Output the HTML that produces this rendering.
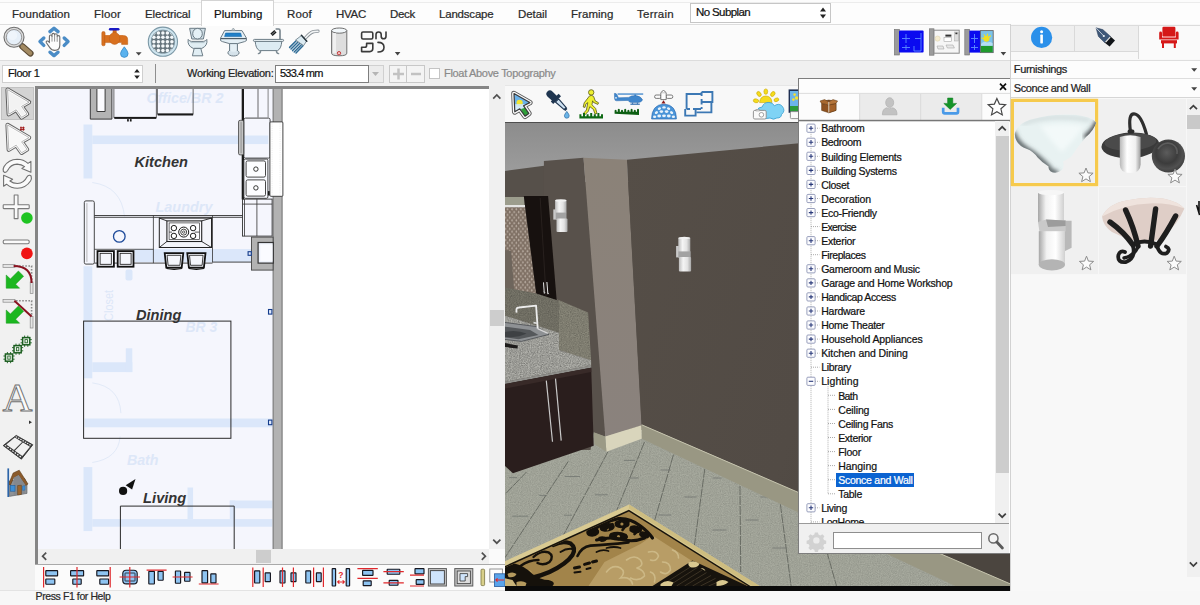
<!DOCTYPE html>
<html>
<head>
<meta charset="utf-8">
<title>Home Designer - Plumbing</title>
<style>
*{box-sizing:border-box;margin:0;padding:0}
html,body{width:1200px;height:605px;overflow:hidden;background:#f0f0f0}
body{font-family:"Liberation Sans","DejaVu Sans",sans-serif;font-size:11px;color:#1a1a1a;position:relative}
#app{position:absolute;left:0;top:0;width:1200px;height:605px;overflow:hidden;background:#f0f0f0}
#app>div,#app>svg,#app>span{position:absolute}
.t{position:absolute;white-space:nowrap;color:#2a2a2a;-webkit-text-stroke:0.22px;font-family:"Liberation Sans","DejaVu Sans",sans-serif}
svg{display:block;overflow:hidden}
.b{position:absolute}
</style>
</head>
<body>
<div id="app">
<!-- ===== top tab bar ===== -->
<div style="left:0;top:0;width:1200px;height:26px;background:#fcfcfc"></div>
<div style="left:0;top:2px;width:1200px;height:23px;background:#fdfdfd;border-top:1px solid #ececec;border-bottom:1px solid #dddddd"></div>
<div style="left:201px;top:0;width:73px;height:26px;background:#fff;border:1px solid #d4d4d4;border-bottom:none"></div>
<span class="t" style="left:12.0px;top:9.02px;font-size:11.5px;line-height:11.5px;letter-spacing:0.045px;">Foundation</span>
<span class="t" style="left:94.0px;top:9.02px;font-size:11.5px;line-height:11.5px;letter-spacing:0.159px;">Floor</span>
<span class="t" style="left:145.0px;top:9.02px;font-size:11.5px;line-height:11.5px;letter-spacing:-0.116px;">Electrical</span>
<span class="t" style="left:214.0px;top:9.02px;font-size:11.5px;line-height:11.5px;letter-spacing:0.068px;color:#111">Plumbing</span>
<span class="t" style="left:287.0px;top:9.02px;font-size:11.5px;line-height:11.5px;letter-spacing:0.176px;">Roof</span>
<span class="t" style="left:336.0px;top:9.02px;font-size:11.5px;line-height:11.5px;letter-spacing:-0.277px;">HVAC</span>
<span class="t" style="left:390.0px;top:9.02px;font-size:11.5px;line-height:11.5px;letter-spacing:-0.301px;">Deck</span>
<span class="t" style="left:439.0px;top:9.02px;font-size:11.5px;line-height:11.5px;letter-spacing:-0.198px;">Landscape</span>
<span class="t" style="left:518.0px;top:9.02px;font-size:11.5px;line-height:11.5px;letter-spacing:-0.068px;">Detail</span>
<span class="t" style="left:571.0px;top:9.02px;font-size:11.5px;line-height:11.5px;letter-spacing:0.045px;">Framing</span>
<span class="t" style="left:637.0px;top:9.02px;font-size:11.5px;line-height:11.5px;letter-spacing:0.263px;">Terrain</span>
<div style="left:690px;top:3px;width:141px;height:20px;background:#fff;border:1px solid #c6c6c6"></div>
<span class="t" style="left:696.0px;top:7.27px;font-size:11.5px;line-height:11.5px;letter-spacing:-0.611px;color:#111">No Subplan</span>
<svg style="left:818px;top:6px" width="10" height="14" viewBox="0 0 10 14"><path d="M2 5.5 L5 1.5 L8 5.5Z M2 8.5 L5 12.5 L8 8.5Z" fill="#222"/></svg>
<!-- ===== icon toolbar ===== -->
<div style="left:0;top:26px;width:1010px;height:35px;background:#fbfbfb;border-bottom:1px solid #dcdcdc"></div>
<!-- ===== row 3 ===== -->
<div style="left:0;top:61px;width:1010px;height:25px;background:#f0f0f0"></div>
<div style="left:2px;top:65px;width:141px;height:18px;background:#fff;border:1px solid #cfcfcf"></div>
<span class="t" style="left:8.0px;top:68.19px;font-size:11.0px;line-height:11.0px;letter-spacing:-0.393px;color:#111">Floor 1</span>
<svg style="left:132px;top:67px" width="10" height="14" viewBox="0 0 10 14"><path d="M2.2 5.5 L5 2 L7.8 5.5Z M2.2 8.5 L5 12 L7.8 8.5Z" fill="#222"/></svg>
<div style="left:155px;top:64px;width:1px;height:19px;background:#8e8e8e"></div>
<span class="t" style="left:187.0px;top:68.19px;font-size:11.0px;line-height:11.0px;letter-spacing:-0.279px;color:#222">Working Elevation:</span>
<div style="left:275px;top:64.6px;width:109px;height:18px;background:#fff;border:1px solid #d0d0d0"></div>
<div style="left:275px;top:64.6px;width:94px;height:18px;background:#fff;border:1px solid #7e7e7e"></div>
<div style="left:369px;top:65.6px;width:14px;height:16px;background:#ececec"></div>
<svg style="left:371px;top:71px" width="9" height="6" viewBox="0 0 9 6"><path d="M1 1 L8 1 L4.5 5Z" fill="#b4b4b4"/></svg>
<span class="t" style="left:280.0px;top:68.19px;font-size:11.0px;line-height:11.0px;letter-spacing:-0.803px;color:#111">533.4 mm</span>
<div style="left:389px;top:65px;width:18px;height:18px;background:#f4f4f4;border:1px solid #c8c8c8"></div>
<div style="left:407px;top:65px;width:18px;height:18px;background:#f4f4f4;border:1px solid #c8c8c8;border-left:none"></div>
<svg style="left:389px;top:65px" width="36" height="18" viewBox="0 0 36 18"><path d="M4 7.800h11v2.500H4z M8.250 3.500h2.500v11h-2.500z M22 7.800h10v2.500H22z" fill="#c2c2c2"/></svg>
<div style="left:429px;top:68px;width:11px;height:11px;background:#fff;border:1px solid #c4c4c4"></div>
<span class="t" style="left:444.0px;top:68.19px;font-size:11.0px;line-height:11.0px;letter-spacing:-0.316px;color:#8a8a8a">Float Above Topography</span>
<!-- ===== toolbar icons ===== -->
<svg style="left:0;top:26px" width="1010" height="35" viewBox="0 26 1010 35">
  <!-- magnifier -->
  <line x1="22.400" y1="46.400" x2="30.400" y2="53.400" stroke="#5a4a34" stroke-width="6.400" stroke-linecap="round"/>
  <line x1="22.600" y1="46.600" x2="30.200" y2="53.200" stroke="#a28a62" stroke-width="4.200" stroke-linecap="round"/>
  <circle cx="14" cy="37.200" r="10" fill="#dcdcdc" stroke="#6e6e6e" stroke-width="1.100"/>
  <circle cx="14" cy="37.200" r="7.700" fill="#e6eff8" stroke="#8e8e8e" stroke-width="0.900"/>
  <circle cx="12.600" cy="35.600" r="4.600" fill="#f1f6fb" opacity="0.800"/>
  <!-- pan -->
  <g fill="none" stroke="#4a8cc6" stroke-width="3.400" stroke-linecap="round" stroke-linejoin="round">
    <path d="M50 31.600 L54 28.200 L58 31.600"/><path d="M50 52.200 L54 55.600 L58 52.200"/>
    <path d="M43.800 38 L40 41.600 L43.800 45.400"/><path d="M64.200 38 L68 41.600 L64.200 45.400"/>
  </g>
  <path d="M49.400 42.600 V36.400 Q49.400 35 50.700 35 Q52 35 52 36.400 V34.800 Q52 33.400 53.300 33.400 Q54.600 33.400 54.600 34.800 V35 Q54.600 33.800 55.900 33.800 Q57.200 33.800 57.200 35.200 V36.600 Q57.200 35.600 58.500 35.600 Q59.800 35.600 59.800 37 V45 Q59.800 50.400 54.800 50.400 Q51.600 50.400 49.800 47.600 L46.400 42.800 Q45.800 41.600 46.900 41.100 Q48 40.700 48.800 41.800Z" fill="#fdfdfd" stroke="#6c6c6c" stroke-width="1.100" stroke-linejoin="round"/>
  <path d="M52 36.400 V41.600 M54.600 35 V41.600 M57.200 36.600 V41.800" stroke="#8a8a8a" stroke-width="0.900" fill="none"/>
  <!-- faucet -->
  <g fill="#d8701f" stroke="#b95c16" stroke-width="0.500">
    <rect x="113" y="29.800" width="3.200" height="3.600"/>
    <rect x="101.800" y="31.600" width="3.300" height="14.200" rx="1.400"/>
    <path d="M104.600 35.600 H123.400 Q127.700 35.600 127.700 39.800 V44.400 H121.600 V42.600 H104.600Z"/>
    <ellipse cx="114.600" cy="38.400" rx="5.300" ry="6"/>
  </g>
  <path d="M105 36 H110 M119.600 36 H123" stroke="#d8701f" stroke-width="1" fill="none"/>
  <rect x="108.900" y="27.900" width="10.600" height="2.600" rx="1.300" fill="#1a1ac4"/>
  <path d="M124.300 46.800 q3.800 4.800 3.800 6.800 a3.800 3.800 0 0 1 -7.600 0 q0-2 3.800-6.800z" fill="#5ab2ee" stroke="#2a7fc0" stroke-width="0.700"/>
  <path d="M135.800 52.200 h5.800 l-2.900 3.300z" fill="#444"/>
  <!-- drain -->
  <defs><clipPath id="drc"><circle cx="162.9" cy="41.7" r="11.600"/></clipPath></defs>
  <circle cx="162.9" cy="41.7" r="14.600" fill="#cfe5ef" stroke="#7c98a6" stroke-width="1.100"/>
  <circle cx="162.9" cy="41.7" r="11.800" fill="#66757d" stroke="#7c98a6" stroke-width="0.700"/>
  <g fill="#f4f8fa" clip-path="url(#drc)"><circle cx="153.9" cy="32.9" r="1.750"/><circle cx="153.9" cy="37.3" r="1.750"/><circle cx="153.9" cy="41.7" r="1.750"/><circle cx="153.9" cy="46.1" r="1.750"/><circle cx="153.9" cy="50.5" r="1.750"/><circle cx="158.4" cy="32.9" r="1.750"/><circle cx="158.4" cy="37.3" r="1.750"/><circle cx="158.4" cy="41.7" r="1.750"/><circle cx="158.4" cy="46.1" r="1.750"/><circle cx="158.4" cy="50.5" r="1.750"/><circle cx="162.9" cy="28.5" r="1.750"/><circle cx="162.9" cy="32.9" r="1.750"/><circle cx="162.9" cy="37.3" r="1.750"/><circle cx="162.9" cy="41.7" r="1.750"/><circle cx="162.9" cy="46.1" r="1.750"/><circle cx="162.9" cy="50.5" r="1.750"/><circle cx="162.9" cy="54.9" r="1.750"/><circle cx="167.4" cy="32.9" r="1.750"/><circle cx="167.4" cy="37.3" r="1.750"/><circle cx="167.4" cy="41.7" r="1.750"/><circle cx="167.4" cy="46.1" r="1.750"/><circle cx="167.4" cy="50.5" r="1.750"/><circle cx="171.9" cy="32.9" r="1.750"/><circle cx="171.9" cy="37.3" r="1.750"/><circle cx="171.9" cy="41.7" r="1.750"/><circle cx="171.9" cy="46.1" r="1.750"/><circle cx="171.9" cy="50.5" r="1.750"/></g>
  <!-- toilet -->
  <g fill="#e1eef4" stroke="#6c7c86" stroke-width="1" stroke-linejoin="round">
    <path d="M189.600 28.300 H205.400 L203.400 39 H191.800Z" fill="#cfdde5"/>
    <ellipse cx="197.500" cy="33.700" rx="4.800" ry="5.300" fill="#e4f0f6"/>
    <path d="M188.200 39.400 Q189.400 41.400 191.600 41.400 H203.400 Q205.600 41.400 206.800 39.400 Q208 45.600 201.800 48.400 H193.200 Q187 45.600 188.200 39.400Z"/>
    <path d="M194.200 48.400 H200.800 L202.800 55.800 H192.400Z"/>
  </g>
  <path d="M190.600 42.600 H204.400" stroke="#9db0ba" stroke-width="0.700" fill="none"/>
  <!-- pedestal sink -->
  <g fill="#e4eff5" stroke="#6c7c86" stroke-width="1" stroke-linejoin="round">
    <path d="M229.600 43.400 H237.400 V51 H229.600Z"/>
    <ellipse cx="233.500" cy="52.800" rx="5.600" ry="3.200" fill="#d5e2ea"/>
    <path d="M229.600 50.600 Q233.500 53 237.400 50.600 V44 H229.600Z" stroke="none"/>
    <path d="M229.600 43.400 V51 M237.400 43.400 V51" fill="none"/>
    <path d="M224.600 30.600 H242 L246.400 38 Q247.400 41.400 244.600 41.600 L237.600 43.600 H229.400 L222.400 41.600 Q219.600 41.400 220.600 38Z"/>
    <path d="M220.800 38.600 H246.200" stroke="#4e5c66" stroke-width="1.200" fill="none"/>
    <path d="M225.600 33 H240.600 L241.600 36.600 H224.600Z" fill="#1f7fc8" stroke="#1a68a6" stroke-width="0.600"/>
    <path d="M231.600 30.400 L233.300 28 L235 30.400Z" fill="#cfd6da" stroke="#8a969e" stroke-width="0.700"/>
  </g>
  <!-- bathtub -->
  <g stroke="#6c7c86" stroke-width="1" fill="#dcebf2" stroke-linejoin="round">
    <path d="M280 39.600 V30.400 Q280 29 278.600 29 H275.600" fill="none" stroke="#75838b" stroke-width="1.600"/>
    <path d="M270.400 33.400 L274.400 30 L276.600 32.600 L272.600 36Z" fill="#17191b" stroke="none"/>
    <path d="M271.600 34.600 L275.600 31.200" stroke="#d8d8d8" stroke-width="0.600"/>
    <path d="M255.200 41 H281.800 Q281.400 48.600 277.600 50.600 H259.400 Q255.600 48.600 255.200 41Z"/>
    <rect x="253.400" y="39.400" width="30.200" height="2" rx="1" fill="#eef5f9"/>
    <path d="M260.600 50.800 Q260.600 53.400 258.400 53.600 M276.400 50.800 Q276.400 53.400 278.600 53.600" fill="none" stroke="#7c8a92" stroke-width="1.400" stroke-linecap="round"/>
  </g>
  <!-- shower -->
  <g>
    <path d="M305.400 38 Q310 32.600 313.600 31.600 L318 31.200" fill="none" stroke="#8a9298" stroke-width="3.200" stroke-linecap="round"/>
    <path d="M305.400 38 Q310 32.600 313.600 31.600 L318 31.200" fill="none" stroke="#f4f6f7" stroke-width="1.600" stroke-linecap="round"/>
    <g stroke="#2f6c96" stroke-width="1.500" stroke-linecap="round">
      <line x1="296.200" y1="40.800" x2="289.600" y2="47.400"/><line x1="298" y1="42" x2="291" y2="49"/><line x1="299.800" y1="43.200" x2="292.600" y2="50.600"/><line x1="301.600" y1="44.400" x2="294.200" y2="52"/><line x1="303.200" y1="45.400" x2="296" y2="53"/>
    </g>
    <path d="M301.600 35.400 L306.600 41 L303.600 45.600 L295.600 40Z" fill="#dcebf2" stroke="#74858f" stroke-width="0.900" stroke-linejoin="round"/>
    <path d="M301.400 35.200 L306.800 41.200" stroke="#27343c" stroke-width="1.500" stroke-linecap="round"/>
  </g>
  <!-- water heater -->
  <g>
    <path d="M331.600 30.600 v22.600 q0 2.600 7.600 2.600 q7.600 0 7.600-2.600 v-22.600z" fill="#dedede" stroke="#6e6e6e" stroke-width="1"/>
    <ellipse cx="339.2" cy="30.600" rx="7.600" ry="2.600" fill="#f2f7fa" stroke="#6e6e6e" stroke-width="1"/>
    <rect x="333" y="33" width="3" height="20" fill="#f4f4f4" opacity="0.8"/>
    <circle cx="339" cy="53.2" r="1.7" fill="#f2c0c0" stroke="#c03030" stroke-width="0.9"/>
  </g>
  <!-- pipes -->
  <g fill="none" stroke="#3a3a3a" stroke-width="1.6" stroke-linejoin="round" stroke-linecap="round">
    <rect x="361.6" y="32" width="11.2" height="7" rx="1.4"/>
    <path d="M376 38.8 v-4.2 q0-2.6 2.6-2.6 q2.6 0 2.6 2.6 v1.6 q0 2.6 2.4 2.6 q2.4 0 2.4-2.6 v-4.2"/>
    <path d="M366.6 43.4 h6.2 v5.2 q0 3 -3 3 h-8.2 v-4.4 h3.2 q1.8 0 1.8-1.8z"/>
    <path d="M378 42.4 q6 0 6 4.8 q0 4.8 -6 4.8"/>
  </g>
  <path d="M394.8 52 h5.6 l-2.8 3.4z" fill="#444"/>
  <!-- right side plan icons -->
  <g>
    <rect x="894.4" y="29.4" width="5" height="25.6" fill="#9b9b9b" stroke="#6f6f6f" stroke-width="0.6"/>
    <rect x="899" y="30.6" width="24.6" height="22" rx="1" fill="#0a0af0"/>
    <path d="M902 38.5 h8 M906 34 v9 M915 38.5 h6 M921 33 v18 h-7 v-5 M902 47.5 h8 M906 45 v5" fill="none" stroke="#5c8cff" stroke-width="0.9"/>
    <rect x="929.4" y="28.8" width="4.6" height="26.4" fill="#9b9b9b" stroke="#6f6f6f" stroke-width="0.6"/>
    <rect x="934" y="30.2" width="25.2" height="23" fill="#f6f6f6" stroke="#8a8a8a" stroke-width="1"/>
    <circle cx="937.6" cy="38.6" r="2.6" fill="#f5ecd0" stroke="#d8cfa8" stroke-width="0.5"/>
    <rect x="945.4" y="34.6" width="6" height="2" fill="#333"/><rect x="944" y="37.4" width="7.4" height="4" fill="#fff" stroke="#999" stroke-width="0.5"/>
    <rect x="954.6" y="32" width="3.6" height="9" fill="#ddd" stroke="#999" stroke-width="0.4"/><rect x="955.4" y="32.6" width="2" height="1.6" fill="#333"/>
    <path d="M937 46 h6 l1 3 h-6z M946 45 h7 l1.4 3 h-7z" fill="#e8e8e8" stroke="#999" stroke-width="0.5"/>
    <rect x="964.8" y="29.4" width="4.8" height="25.6" fill="#9b9b9b" stroke="#6f6f6f" stroke-width="0.6"/>
    <rect x="969.4" y="30.6" width="11" height="22" fill="#0a0af0"/>
    <path d="M971 38.5 h7 M974.5 34 v9 M971 47.5 h7 M974.5 45 v5" fill="none" stroke="#5c8cff" stroke-width="0.9"/>
    <rect x="980.4" y="30.6" width="12.8" height="22" fill="#7cc4ea" stroke="#666" stroke-width="0.9"/>
    <rect x="980.9" y="45.8" width="11.8" height="6.4" fill="#1f9a2c"/>
    <path d="M981 44 q3-3.4 6-1.4 q3-1.6 5.6 0.6 v2.6 h-11.6z" fill="#b5dff2"/>
    <circle cx="986.4" cy="38.8" r="3" fill="#f0e020"/>
    <path d="M982 38 l1.6 0.6 M984 34.8 l0.9 1.4 M987.6 34.2 l-0.3 1.6 M990.4 36 l-1.2 1" stroke="#f0e020" stroke-width="1.2" stroke-linecap="round"/>
    <path d="M1000.6 52 h5.6 l-2.8 3.4z" fill="#444"/>
  </g>
</svg>
<!-- ===== left tool column ===== -->
<div style="left:0;top:86px;width:35px;height:505px;background:#f1f1f1"></div>
<div style="left:1px;top:87px;width:33px;height:33px;background:#d3d3d3;border:1px solid #c2c2c2"></div>
<svg style="left:0;top:86px" width="35" height="505" viewBox="0 86 35 505">
  <defs>
    <path id="arw" d="M7.6 89.6 L29 102.2 L21.6 106.4 L27 114 L21.6 117.4 L16.2 109.8 L8.8 114.2Z"/>
  </defs>
  <use href="#arw" fill="none" stroke="#5e5e5e" stroke-width="4.4" stroke-linejoin="round"/>
  <use href="#arw" fill="#f2f2f2" stroke="#fdfdfd" stroke-width="2.4" stroke-linejoin="round"/>
  <use href="#arw" fill="none" stroke="#9a9a9a" stroke-width="0.8" stroke-linejoin="round"/>
  <g transform="translate(0,35.4)">
    <use href="#arw" fill="none" stroke="#666" stroke-width="4.4" stroke-linejoin="round"/>
    <use href="#arw" fill="#f8f8f8" stroke="#fefefe" stroke-width="2.4" stroke-linejoin="round"/>
    <use href="#arw" fill="none" stroke="#a4a4a4" stroke-width="0.8" stroke-linejoin="round"/>
  </g>
  <path d="M21 126.6 v4 M23.4 126.6 v4 M20 127.8 h4.6 M20 129.6 h4.6" stroke="#a01818" stroke-width="1" fill="none"/>
  <!-- rotate arrows -->
  <g fill="#fafafa" stroke="#707070" stroke-width="1.100" stroke-linejoin="round">
    <path d="M3.400 171.600 Q2.600 169 4 166.600 Q8.500 159.600 17.100 159.300 Q23.600 159.400 28 163.400 L30.900 161.400 L30.900 172.300 L21.900 168.400 L24.600 166.600 Q21.500 164.200 17.100 164.100 Q10.500 164.400 7.600 170.600 Q6.600 172.600 4.800 172.400Z"/>
    <path d="M31.100 176 Q31.900 178.600 30.500 181 Q26 188 17.400 188.300 Q10.900 188.200 6.500 184.200 L3.600 186.200 L3.600 175.300 L12.600 179.200 L9.900 181 Q13 183.400 17.400 183.500 Q24 183.200 26.900 177 Q27.900 175 29.700 175.200Z"/>
  </g>
  <!-- plus / green -->
  <path d="M14.2 195 h3.8 v9.8 h10.6 q0.6 0 0.6 0.6 v2.6 q0 0.6-0.6 0.6 h-10.6 v10 h-3.8 v-10 h-10.4 q-0.6 0-0.6-0.6 v-2.6 q0-0.6 0.6-0.6 h10.4z" fill="#fafafa" stroke="#7a7a7a" stroke-width="1.1" stroke-linejoin="round"/>
  <circle cx="26.9" cy="218" r="5.8" fill="#1fc422"/>
  <!-- minus / red -->
  <rect x="3.2" y="240" width="26" height="3.8" rx="1.6" fill="#fafafa" stroke="#7a7a7a" stroke-width="1.1"/>
  <circle cx="26.9" cy="253.4" r="5.8" fill="#f01414"/>
  <!-- fillet -->
  <g>
    <rect x="3" y="264.6" width="12" height="2.8" fill="#e4e4e4" stroke="#8a8a8a" stroke-width="0.7"/>
    <rect x="30.2" y="282" width="2.8" height="11.4" fill="#e4e4e4" stroke="#8a8a8a" stroke-width="0.7"/>
    <path d="M16 266 h15.6 v16" fill="none" stroke="#8a8a8a" stroke-width="1.6" stroke-dasharray="1.6 1.5"/>
    <path d="M13.6 266 Q31.6 266 31.6 283" fill="none" stroke="#8a1220" stroke-width="2"/>
    <path d="M6.2 275 L6.2 288.2 L19.6 288.2 L15.6 284.2 L23.6 276.2 L18.4 271 L10.4 279 Z" fill="#1cb720" stroke="#109414" stroke-width="0.5"/>
  </g>
  <!-- chamfer -->
  <g>
    <rect x="3" y="299.4" width="12" height="2.8" fill="#e4e4e4" stroke="#8a8a8a" stroke-width="0.7"/>
    <rect x="30.2" y="316.6" width="2.8" height="11.4" fill="#e4e4e4" stroke="#8a8a8a" stroke-width="0.7"/>
    <path d="M16 300.8 h15.6 v15" fill="none" stroke="#8a8a8a" stroke-width="1.6" stroke-dasharray="1.6 1.5"/>
    <path d="M14.4 300.8 L31.6 316.4" fill="none" stroke="#8a1220" stroke-width="2"/>
    <path d="M6.2 310 L6.2 323.2 L19.6 323.2 L15.6 319.2 L23.6 311.2 L18.4 306 L10.4 314 Z" fill="#1cb720" stroke="#109414" stroke-width="0.5"/>
  </g>
  <!-- green chain -->
  <g fill="#e6efe6" stroke="#1c5e20" stroke-width="1.5">
    <g transform="translate(9,357.6)"><path d="M-5.6 -1.6h11.2M-5.6 1.6h11.2M-1.6 -5.6v11.2M1.6 -5.6v11.2" fill="none" stroke-width="0.9"/><rect x="-3.6" y="-3.6" width="7.2" height="7.2"/><rect x="-1.2" y="-1.6" width="2.4" height="3.2" stroke-width="0.8"/></g>
    <g transform="translate(17.6,349.2)"><path d="M-5.6 -1.6h11.2M-5.6 1.6h11.2M-1.6 -5.6v11.2M1.6 -5.6v11.2" fill="none" stroke-width="0.9"/><rect x="-3.6" y="-3.6" width="7.2" height="7.2"/><rect x="-1.2" y="-1.6" width="2.4" height="3.2" stroke-width="0.8"/></g>
    <g transform="translate(26.2,341.2)"><path d="M-5.6 -1.6h11.2M-5.6 1.6h11.2M-1.6 -5.6v11.2M1.6 -5.6v11.2" fill="none" stroke-width="0.9"/><rect x="-3.6" y="-3.6" width="7.2" height="7.2"/><rect x="-1.2" y="-1.6" width="2.4" height="3.2" stroke-width="0.8"/></g>
  </g>
  <!-- text tool A -->
  <text x="17.6" y="411.4" text-anchor="middle" font-family="Liberation Serif, DejaVu Serif, serif" font-size="40" fill="#fbfbfb" stroke="#6f6f6f" stroke-width="0.9" textLength="30" lengthAdjust="spacingAndGlyphs">A</text>
  <path d="M29 420.4 L32 422.2 L29 424z" fill="#333"/>
  <!-- film strip -->
  <g>
    <path d="M3.2 445.6 L16.2 435.4 L32.8 444.8 L21.4 459.2Z" fill="#3a3a3a" stroke="#2a2a2a" stroke-width="0.8" stroke-linejoin="round"/>
    <path d="M6.3 444.5 L14.0 450.1 L22.1 442.0 L14.8 437.6Z M14.9 450.7 L22.4 456.1 L30.0 446.7 L22.9 442.5Z" fill="#f2f2f2"/>
    <path d="M4.5 445.7 L5.8 446.6 L6.7 445.9 L5.4 445.0Z M15.4 437.0 L16.6 437.7 L17.4 436.9 L16.3 436.2Z M7.0 447.5 L8.2 448.4 L9.1 447.6 L7.8 446.7Z M17.6 438.3 L18.8 439.0 L19.7 438.2 L18.5 437.5Z M9.4 449.3 L10.7 450.2 L11.5 449.4 L10.3 448.5Z M19.9 439.6 L21.1 440.3 L22.0 439.5 L20.8 438.8Z M11.9 451.1 L13.1 452.0 L14.0 451.2 L12.7 450.3Z M22.2 441.0 L23.3 441.7 L24.2 440.8 L23.0 440.1Z M14.3 452.9 L15.6 453.9 L16.4 453.0 L15.1 452.0Z M24.4 442.3 L25.6 443.0 L26.5 442.1 L25.3 441.4Z M16.7 454.7 L18.0 455.7 L18.8 454.7 L17.6 453.8Z M26.7 443.6 L27.9 444.3 L28.7 443.4 L27.5 442.7Z M19.2 456.5 L20.5 457.5 L21.3 456.5 L20.0 455.6Z M29.0 445.0 L30.1 445.7 L31.0 444.7 L29.8 444.0Z " fill="#f4f4f4"/>
  </g>
  <!-- house -->
  <g>
    <path d="M9.4 481 L24.8 478.6 L27 484.4 L27 493.4 L9.4 496.4Z" fill="#8f9296" stroke="#5d5f63" stroke-width="0.6"/>
    <path d="M8.6 484 L13.2 473 L19.2 470.2 L28 484 L25.6 485.4 L18.6 475.2 L13.6 478 L10.4 485z" fill="#8a5a2b" stroke="#5d3a18" stroke-width="0.6"/>
    <path d="M13.6 477.8 L18.6 475 L25.2 484.6 L25.2 493.6 L13.6 495.6z" fill="#85888d"/>
    <rect x="10.4" y="485.6" width="4.6" height="5.6" fill="#3d8fd6" stroke="#1f5f9e" stroke-width="0.6"/>
    <path d="M17.6 485.6 l3.8 -0.4 v9.2 l-3.8 0.6z" fill="#9a6630" stroke="#5d3a18" stroke-width="0.5"/>
    <path d="M22.6 486 l2.4-0.3 v4.4 l-2.4 0.3z" fill="#3d8fd6" stroke="#1f5f9e" stroke-width="0.4"/>
    <rect x="7.4" y="468.4" width="1.7" height="28.6" fill="#2c64a8"/>
  </g>
</svg>
<!-- ===== 2D plan canvas ===== -->
<div style="left:35px;top:86px;width:454px;height:478px;background:#858585"></div>
<div style="left:489px;top:86px;width:15.5px;height:3px;background:#f0f0f0"></div>
<div style="left:37.5px;top:88.5px;width:451.5px;height:460px;background:#fff"></div>
<svg style="left:37.5px;top:88.5px" width="451.5" height="460" viewBox="37.5 88.5 451.5 460">
  <rect x="37" y="88" width="236" height="461" fill="#f5f6fd"/>
  <!-- ghost layer (floor below) -->
  <g fill="#dbe7fa">
    <rect x="83" y="124" width="8.8" height="54"/>
    <rect x="91.8" y="135" width="176" height="8.6"/>
    <rect x="134" y="248.6" width="138" height="13"/>
    <rect x="83" y="265.8" width="8.8" height="112"/>
    <rect x="125" y="269" width="7" height="11" rx="2"/>
    <rect x="91.8" y="361.8" width="40" height="9.8"/>
    <rect x="125.3" y="347.8" width="6.5" height="23.8"/>
    <rect x="84" y="418" width="188" height="8.8"/>
    <rect x="83" y="466.6" width="8.8" height="64"/>
    <rect x="91.8" y="518.6" width="180" height="7.6"/>
    <rect x="187" y="487" width="5.6" height="31.6"/>
    <rect x="229.3" y="500" width="42.5" height="7.8"/>
    <rect x="229.3" y="500" width="5.5" height="18.6"/>
  </g>
  <g fill="none" stroke="#e2eaf8" stroke-width="1">
    <path d="M91.8 182 Q121 186 124 216"/>
    <path d="M91.8 382.4 Q119 386 120.4 412.6"/>
    <path d="M91.8 462 Q118 458 119.6 436"/>
  </g>
  <g font-family="Liberation Sans, sans-serif" font-style="italic" font-weight="bold" fill="#dde7f8">
    <text x="146" y="102.4" font-size="15.5" textLength="77" lengthAdjust="spacingAndGlyphs">Office/BR 2</text>
    <text x="155" y="211.6" font-size="15.5" textLength="57" lengthAdjust="spacingAndGlyphs">Laundry</text>
    <text x="185" y="331.4" font-size="15.5" textLength="31.6" lengthAdjust="spacingAndGlyphs">BR 3</text>
    <text x="126.4" y="464.4" font-size="15.5" textLength="31.6" lengthAdjust="spacingAndGlyphs">Bath</text>
    <text transform="translate(112.2,320.4) rotate(-90)" font-size="13" font-style="normal" font-weight="normal" textLength="31" lengthAdjust="spacingAndGlyphs">Closet</text>
  </g>
  <!-- right exterior wall -->
  <rect x="272.6" y="88" width="9" height="461" fill="#b2b2b2"/>
  <path d="M272.6 88 V549 M281.6 88 V549" stroke="#6e6e6e" stroke-width="1" fill="none"/>
  <!-- inner black line -->
  <rect x="241.2" y="88" width="2.3" height="111" fill="#1a1a1a"/>
  <path d="M257.5 88 V117" stroke="#444" stroke-width="0.8"/>
  <path d="M267.6 88 V117" stroke="#555" stroke-width="0.7"/>
  <!-- top wall stub -->
  <path d="M89.8 88 V118.6 H111.4 V88" fill="#b4b4b4" stroke="#3a3a3a" stroke-width="1"/>
  <path d="M96.4 88 V111 H104.6 V88" fill="#fbfbfe" stroke="#3a3a3a" stroke-width="1"/>
  <!-- wall cabinets top -->
  <rect x="113.4" y="86" width="42.4" height="31" fill="none" stroke="#444" stroke-width="0.8"/>
  <rect x="113.8" y="116.4" width="42" height="2" fill="#1a1a1a"/>
  <rect x="126.6" y="118.6" width="1.7" height="2.4" fill="#1a1a1a"/><rect x="129.4" y="118.6" width="1.7" height="2.4" fill="#1a1a1a"/>
  <rect x="156.8" y="86" width="35.8" height="27.6" fill="none" stroke="#444" stroke-width="0.8"/>
  <rect x="157.2" y="113" width="35.4" height="2" fill="#1a1a1a"/>
  <!-- right counter run (top) -->
  <rect x="243.4" y="117.6" width="26.2" height="40" rx="1.6" fill="none" stroke="#333" stroke-width="0.9"/>
  <rect x="238" y="119.8" width="5.2" height="34.6" rx="1.6" fill="#c4c4c4" stroke="#444" stroke-width="0.8"/>
  <path d="M240.6 121.6 V152.6" stroke="#888" stroke-width="0.8"/>
  <rect x="269.4" y="121.4" width="13" height="74.4" rx="1" fill="#fff" stroke="#333" stroke-width="0.9"/>
  <path d="M271.6 123 V194 M279.6 123 V194" stroke="#ddd" stroke-width="0.6" stroke-dasharray="1 1.2"/>
  <!-- sink -->
  <rect x="243.4" y="158.6" width="24" height="39.2" rx="1.4" fill="#f8f9fe" stroke="#333" stroke-width="0.9"/>
  <rect x="245.6" y="160.4" width="19.4" height="16.2" rx="1.6" fill="#fdfdff" stroke="#333" stroke-width="0.9"/>
  <rect x="245.6" y="179.4" width="19.4" height="16.2" rx="1.6" fill="#fdfdff" stroke="#333" stroke-width="0.9"/>
  <circle cx="255.4" cy="168.6" r="2.2" fill="#fff" stroke="#222" stroke-width="0.9"/>
  <circle cx="255.4" cy="187.4" r="2.2" fill="#fff" stroke="#222" stroke-width="0.9"/>
  <rect x="267.4" y="190.6" width="1.8" height="4.4" fill="#1a1a1a"/>
  <!-- fridge / tall cabinet -->
  <rect x="242" y="198.6" width="29.6" height="37" fill="none" stroke="#333" stroke-width="0.9"/>
  <path d="M256.4 198.6 V235.6 M242 203.6 H271.6 M244 198.6 V235.6" stroke="#333" stroke-width="0.8" fill="none"/>
  <!-- island -->
  <rect x="83.8" y="200.4" width="10" height="63.2" rx="1.6" fill="none" stroke="#333" stroke-width="0.9"/>
  <path d="M86.4 202.6 V261.4" stroke="#999" stroke-width="0.7"/>
  <path d="M93.8 215 H242 M93.8 216.8 H242 M93.8 262.6 H212 M212 261.6 H251" stroke="#333" stroke-width="0.9" fill="none"/>
  <path d="M152.9 215 V262.6 M212 215 V262 M93.8 248.8 H152.9" stroke="#333" stroke-width="0.8" fill="none"/>
  <!-- cooktop -->
  <rect x="158.8" y="217.6" width="52.2" height="29.4" fill="#f4f5fa" stroke="#222" stroke-width="1"/>
  <path d="M158.8 217.6 L166.4 220.4 M211 217.6 L201.2 220.4 M158.8 247 L166.4 241 M211 247 L201.2 241" stroke="#222" stroke-width="0.9"/>
  <rect x="166.4" y="220.4" width="34.8" height="20.6" fill="#fcfcff" stroke="#222" stroke-width="1.1"/>
  <rect x="168.6" y="222.4" width="30.4" height="16.6" fill="none" stroke="#333" stroke-width="0.7"/>
  <g fill="#fff" stroke="#1a1a1a" stroke-width="1">
    <circle cx="173.4" cy="227.6" r="2.7"/><circle cx="173.4" cy="235.4" r="2.7"/>
    <circle cx="192.6" cy="227.6" r="2.7"/><circle cx="192.6" cy="235.4" r="2.7"/>
    <circle cx="183.2" cy="231.6" r="5"/><circle cx="183.2" cy="231.6" r="3" stroke-width="0.8"/><circle cx="183.2" cy="231.6" r="1.2" stroke-width="0.7"/>
  </g>
  <path d="M168.6 231.6 h3 M194 231.6 h5" stroke="#333" stroke-width="0.8"/>
  <circle cx="118.8" cy="235.9" r="5.8" fill="none" stroke="#1d4a9a" stroke-width="1.3"/>
  <!-- stools -->
  <g fill="#f4f6fc" stroke="#111" stroke-width="1.8">
    <rect x="97" y="250.6" width="16.4" height="15.6"/><rect x="117.2" y="250.6" width="15.8" height="15.6"/>
    <path d="M164.2 252.6 h18.6 l-1.6 14.6 h-15.4z"/><path d="M186.8 252.6 h18.2 l-1.6 14.6 h-15z"/>
  </g>
  <g fill="none" stroke="#111" stroke-width="0.8">
    <rect x="99.6" y="252.8" width="11.2" height="11"/><rect x="119.6" y="252.8" width="11" height="11"/>
    <path d="M166.6 254.8 h13.8 l-1 10 h-11.8z M189 254.8 h13.6 l-1 10 h-11.6z"/>
  </g>
  <path d="M166 268 q7.6 1.6 15.4 0 M188.4 268 q7.4 1.6 15 0" stroke="#111" stroke-width="1.2" fill="none"/>
  <!-- grey wall box right -->
  <rect x="251" y="236.6" width="21.6" height="33" fill="#b2b2b2" stroke="#444" stroke-width="0.9"/>
  <rect x="257.6" y="242" width="15.2" height="20.6" fill="#eef2fb" stroke="#333" stroke-width="1.2"/>
  <rect x="259.8" y="244" width="12" height="16.6" fill="#fafbff"/>
  <!-- markers -->
  <g fill="#dfe8fb" stroke="#143c8c" stroke-width="1.1">
    <rect x="247.6" y="251.2" width="3.2" height="3.6"/><rect x="268" y="309" width="3.4" height="4.6"/><rect x="268" y="419.6" width="3.4" height="4.6"/>
  </g>
  <!-- dining + living rects -->
  <rect x="83.1" y="320.6" width="147.3" height="117.2" fill="none" stroke="#2a2a2a" stroke-width="1"/>
  <path d="M119.9 549 V505.6 H233.7 V549" fill="none" stroke="#2a2a2a" stroke-width="1"/>
  <!-- camera -->
  <circle cx="122.6" cy="490.4" r="4.1" fill="#111"/>
  <path d="M125.2 484.8 L135 478.4 L131.6 489z" fill="#111"/>
  <!-- room labels -->
  <g font-family="Liberation Sans, sans-serif" font-style="italic" font-weight="bold" fill="#333" font-size="14">
    <text x="134" y="166.4" textLength="53.4" lengthAdjust="spacingAndGlyphs">Kitchen</text>
    <text x="135.5" y="319.2" textLength="45.4" lengthAdjust="spacingAndGlyphs">Dining</text>
    <text x="142.6" y="502.4" textLength="43.2" lengthAdjust="spacingAndGlyphs">Living</text>
  </g>
</svg>
<!-- ===== scrollbars ===== -->
<div style="left:489px;top:88.5px;width:15.5px;height:461px;background:#f0f0f0"></div>
<div style="left:490px;top:310px;width:13.5px;height:16px;background:#cdcdcd"></div>
<svg style="left:489px;top:88px" width="16" height="461" viewBox="489 88 16 461"><path d="M493.2 98.6 L496.8 95 L500.4 98.6 M493.2 539.6 L496.8 543.2 L500.4 539.6" fill="none" stroke="#505050" stroke-width="1.7"/></svg>
<div style="left:37.5px;top:549px;width:451.5px;height:15px;background:#f0f0f0"></div>
<div style="left:489px;top:549px;width:15.5px;height:15px;background:#fafafa"></div>
<div style="left:256px;top:550px;width:14.6px;height:13px;background:#cdcdcd"></div>
<svg style="left:37px;top:549px" width="452" height="15" viewBox="37 549 452 15"><path d="M46.2 552.6 L42.6 556.2 L46.2 559.8 M481.8 552.6 L485.4 556.2 L481.8 559.8" fill="none" stroke="#505050" stroke-width="1.7"/></svg>
<!-- ===== bottom toolbar ===== -->
<div style="left:35px;top:564px;width:470px;height:1.2px;background:#a9a9a9"></div>
<div style="left:35px;top:565.2px;width:470px;height:25.8px;background:#fbfbfb"></div>
<svg style="left:35px;top:565px" width="470" height="26" viewBox="35 565 470 26">
  <g fill="#8ec4f2" stroke="#16161f" stroke-width="1.15">
    <rect x="45.8" y="570.6" width="11.8" height="5.2" rx="0.4"/><rect x="45.8" y="579" width="9" height="5.2" rx="0.4"/>
    <rect x="70.6" y="570.6" width="13" height="5.2" rx="0.4"/><rect x="72.8" y="579" width="8.4" height="5.2" rx="0.4"/>
    <rect x="96.8" y="570.6" width="11.8" height="5.2" rx="0.4"/><rect x="99.8" y="579" width="8.8" height="5.2" rx="0.4"/>
    <rect x="122.8" y="570.2" width="14.4" height="13.6" rx="3.4"/><rect x="125" y="573" width="10" height="8" rx="0.4" stroke-width="0.8"/>
    <rect x="148.8" y="571.4" width="5.6" height="12.6" rx="0.4"/><rect x="158" y="571.4" width="5.2" height="8.8" rx="0.4"/>
    <rect x="175.4" y="571" width="5.2" height="12.2" rx="0.4"/><rect x="184.6" y="572.4" width="5.4" height="8.8" rx="0.4"/>
    <rect x="202" y="570.6" width="5.6" height="12.2" rx="0.4"/><rect x="210.8" y="573.8" width="5.2" height="9" rx="0.4"/>
    <rect x="254.6" y="570.8" width="5.2" height="12.2" rx="0.4"/><rect x="265.2" y="572.8" width="5.2" height="8.8" rx="0.4"/>
    <rect x="280" y="570.8" width="5" height="12.2" rx="0.4"/><rect x="291" y="572.8" width="5" height="8.8" rx="0.4"/>
    <rect x="305.8" y="570.8" width="4.8" height="12.2" rx="0.4"/><rect x="316.4" y="572.8" width="4.8" height="8.8" rx="0.4"/>
    <rect x="332.2" y="568.6" width="3.4" height="17.4" rx="0.4"/><rect x="346.2" y="568.6" width="3.4" height="17.4" rx="0.4"/>
    <rect x="362.6" y="570.4" width="10.4" height="5" rx="0.4"/><rect x="363.2" y="580.8" width="8" height="4.8" rx="0.4"/>
    <rect x="387.2" y="569.2" width="12.6" height="5" rx="0.4"/><rect x="389.2" y="580.4" width="8.8" height="4.8" rx="0.4"/>
    <rect x="415" y="568.6" width="9" height="5.2" rx="0.4"/><rect x="416.2" y="579.6" width="7.8" height="4.8" rx="0.4"/>
  </g>
  <g stroke="#e0282c" stroke-width="1.2" fill="none">
    <path d="M43.6 567 V587.4 M77 567 V587.4 M110.2 567 V587.4 M119.6 577 H140 M129.8 567 V587.4"/>
    <path d="M146.6 570.2 H166.6 M172.6 577 H192.6 M198.8 584 H218.6"/>
    <path d="M252.8 567.4 V587 M263.2 567.4 V587 M282.5 567.4 V587 M293.4 567.4 V587 M313.6 567.4 V587 M323.4 567.4 V587"/>
    <path d="M357.4 568.6 H377.8 M357.4 578.4 H377.8 M383.4 571.6 H403.8 M383.4 582.8 H403.8 M410 575.2 H424 M410 586 H424"/>
    <path d="M337.4 582 H344.6 M337.4 582 l2-1.6 M337.4 582 l2 1.6 M344.6 582 l-2-1.6 M344.6 582 l-2 1.6"/>
  </g>
  <text x="338.2" y="578.2" font-family="Liberation Sans, sans-serif" font-size="8.5" font-weight="bold" fill="#e0282c">?</text>
  <rect x="428.4" y="568.6" width="18" height="17.4" fill="#c8c8c8" stroke="#5a5a5a" stroke-width="1"/>
  <rect x="430.4" y="570.6" width="14" height="13.4" fill="#cfe4fb" stroke="#4a4a4a" stroke-width="1"/>
  <rect x="454.8" y="568.6" width="18" height="17.4" fill="#c4c4c4" stroke="#5a5a5a" stroke-width="1"/>
  <rect x="457.2" y="571" width="13.2" height="12.6" fill="#dedede" stroke="#4a4a4a" stroke-width="0.9"/>
  <path d="M460 573.6 h7.6 v3 h-2.4 v4.4 h-5.2z" fill="#cfe4fb" stroke="#333" stroke-width="0.8"/>
  <rect x="481" y="569.2" width="3.6" height="16.4" rx="1" fill="#d8cf8a" stroke="#7a7440" stroke-width="0.8"/>
  <rect x="489.8" y="569" width="12.6" height="13" fill="#fdfdfd" stroke="#8a8a8a" stroke-width="0.9"/>
  <rect x="494.4" y="573.8" width="10.6" height="12.8" fill="#5aa4ec" stroke="#2a5a9a" stroke-width="0.8"/>
  <path d="M495.6 580 H504 M495.6 580 l2-1.6 M495.6 580 l2 1.6" stroke="#e0282c" stroke-width="1.1" fill="none"/>
</svg>
<!-- ===== status bar ===== -->
<div style="left:0;top:590.6px;width:1200px;height:14.4px;background:#f7f7f7"></div>
<div style="left:0;top:590.4px;width:505px;height:1px;background:#e3e3e3"></div>
<span class="t" style="left:35.6px;top:590.91px;font-size:10.5px;line-height:10.5px;letter-spacing:-0.406px;color:#2a2a2a">Press F1 for Help</span>
<!-- ===== 3D view toolbar ===== -->
<div style="left:504.5px;top:85.4px;width:506px;height:37px;background:#f8f8f8;border-top:1px solid #e6e6e6"></div>
<div style="left:504.5px;top:121.6px;width:506px;height:1.6px;background:#4e4e4e"></div>
<!-- ===== 3D scene ===== -->
<svg style="left:504.5px;top:123px" width="505.5" height="468" viewBox="504.5 123 505.5 468">
  <defs>
    <linearGradient id="gceil" x1="0" y1="0" x2="0" y2="1"><stop offset="0" stop-color="#8c8c8c"/><stop offset="1" stop-color="#9f9f9f"/></linearGradient>
    <linearGradient id="gwall" x1="0" y1="0" x2="1" y2="0.4"><stop offset="0" stop-color="#554e47"/><stop offset="0.6" stop-color="#524b45"/><stop offset="1" stop-color="#4b453f"/></linearGradient>
    <linearGradient id="gcol" x1="0" y1="0" x2="0" y2="1"><stop offset="0" stop-color="#8b8278"/><stop offset="1" stop-color="#8a827d"/></linearGradient>
    <linearGradient id="gcyl" x1="0" y1="0" x2="1" y2="0"><stop offset="0" stop-color="#bdbdbd"/><stop offset="0.35" stop-color="#f4f4f4"/><stop offset="0.7" stop-color="#e2e2e2"/><stop offset="1" stop-color="#a8a8a8"/></linearGradient>
    <filter id="speck" x="0" y="0" width="100%" height="100%"><feTurbulence type="fractalNoise" baseFrequency="0.9" numOctaves="2" seed="3" result="n"/><feColorMatrix in="n" type="matrix" values="0 0 0 0 0  0 0 0 0 0  0 0 0 0 0  0.9 0.9 0.9 0 -0.95"/><feComposite in2="SourceGraphic" operator="in"/></filter>
    <pattern id="lat" width="4.4" height="5.6" patternUnits="userSpaceOnUse"><rect width="4.4" height="5.6" fill="#7f7064"/><path d="M1.1 0.4 L2.1 2 L1.1 3.6 L0.1 2z M3.3 3.2 L4.3 4.8 L3.3 6.4 L2.3 4.8z M3.3 -2.4 L4.3 -0.8 L3.3 0.8 L2.3 -0.8z" fill="#b9ada2"/></pattern>
    <clipPath id="rugclip"><path d="M628.4 511.400 L504 567.800 L504 586 L747.400 586 Z"/></clipPath>
  </defs>
  <rect x="504" y="122" width="507" height="470" fill="#56504a"/>
  <!-- ceiling -->
  <rect x="504" y="122" width="507" height="60" fill="url(#gceil)"/>
  <!-- floor -->
  <path d="M504 430 H660 L1010 590 H504Z" fill="#a8ab9f"/>
  <path d="M504 430 H660 L1010 590 H504Z" fill="#7a7e78" filter="url(#speck)" opacity="0.13"/>
  <!-- grout lines -->
  <g stroke="#555851" stroke-width="0.9" stroke-dasharray="9 1" fill="none" opacity="0.8">
    <path d="M526 472 L504.5 494.4"/>
    <path d="M567.7 461.5 L504.5 557.6"/>
    <path d="M607.4 451.8 L563 535"/>
    <path d="M644 441.9 L616 511"/>
    <path d="M672.9 454.8 L652 528"/>
    <path d="M704.3 468.8 L693 552"/>
    <path d="M739.5 486 L740.2 572"/>
    <path d="M779.9 504.3 L790.6 586"/>
    <path d="M818 522 L836 586"/>
  </g>
  <g stroke="#6d716c" stroke-width="0.9" fill="none" opacity="0.8">
    <path d="M508.6 477.6 h8 M564.4 476.5 h15 M623.5 460.4 h11 M594.5 494.8 h13 M538.7 495.4 h7 M563.4 515.2 h8 M511.8 516.2 h16 M660 470 h10 M628 478 h10 M684 497 h12 M658 515 h13 M712 478 h9 M712 530 h14 M745 520 h13 M760 497 h10 M772 548 h14 M703 560 h10"/>
  </g>
  <!-- left far wall -->
  <path d="M504 171 L543.6 165.8 L543.6 300 L504 300Z" fill="#56504a"/>
  <!-- column dark face -->
  <path d="M543.4 160.9 L583 157.7 L604.9 436.8 L593 432.4 L590 450 L543.4 450Z" fill="#58514b"/>
  <!-- column light face -->
  <path d="M583 157.7 L626.4 159.7 L641 425.6 L604.8 436.8Z" fill="url(#gcol)"/>
  <!-- main wall -->
  <path d="M626.4 159.7 L1010 123.2 L1010 584 L641.2 424.8Z" fill="url(#gwall)"/>
  <!-- baseboards -->
  <path d="M641.2 424.8 L1010 584 L1010 612 L641.2 438.8Z" fill="#999783"/>
  <path d="M641.2 424.8 L1010 584" stroke="#c6c4ae" stroke-width="1" fill="none"/>
  <path d="M604.7 436.5 L641 425.2 L641.2 438.8 L605.9 451.8Z" fill="#d9d5bc"/>
  <path d="M593.3 432.2 L604.7 436.5 L605.9 451.8 L594 444.2Z" fill="#9b9a86"/>
  <!-- pale strip + lattice -->
  <rect x="504" y="197" width="20" height="8.4" fill="#9c9d8d"/>
  <rect x="504" y="205" width="20.6" height="2.6" fill="#e4e4e2"/>
  <path d="M504 207.6 L524.6 207.6 L536 294 L504 288Z" fill="url(#lat)"/>
  <path d="M504 250 L510.6 251 L513.6 290 L504 288Z" fill="#6e655c"/>
  <!-- tall black cabinet -->
  <path d="M523.3 196 L547.6 196 L556.2 300.4 L535.7 293.6Z" fill="#17110f"/>
  <path d="M539.7 198 L545.6 296.4" stroke="#2c2522" stroke-width="0.8"/>
  <path d="M543 282.4 L543.8 293.6 M546.4 282 L547.4 294.2" stroke="#e8e8e8" stroke-width="1" fill="none"/>
  <path d="M543.4 291.6 l1.4 1.4 M547 292.6 l1.6 1.4" stroke="#cfcfcf" stroke-width="0.8"/>
  <!-- backsplash -->
  <path d="M504 287.400 L535.700 293.600 L556.200 300 L558.500 301 L558.500 332.800 L504 315.500Z" fill="#7a786c"/>
  <path d="M555.800 299 L587.600 312.600 L590.600 360.200 L558.500 350 L558.500 301Z" fill="#8b897b"/>
  <path d="M504 287.400 L535.700 293.600 L555.800 299 L587.600 312.600 L590.600 360.200 L558.500 350 L558.500 332.800 L504 315.500Z" fill="#34322c" filter="url(#speck)" opacity="0.220"/>
  <!-- countertop -->
  <path d="M504 315.500 L558.500 332.800 L558.500 350 L590.600 360.200 L590.600 365.600 L504 381.800Z" fill="#b2b2ac"/>
  <path d="M504 315.500 L558.500 332.800 L558.500 350 L590.600 360.200 L590.600 365.600 L504 381.800Z" fill="#4a4a4a" filter="url(#speck)" opacity="0.320"/>
  <path d="M504 381.800 L590.600 365.600 L590.700 367.800 L504 384.200Z" fill="#8f8f8b"/>
  <!-- sink -->
  <path d="M504 322.4 L536 326.6 L548.4 334.4 L521 341.4 L504 339.4Z" fill="#8e9194" stroke="#4a4d50" stroke-width="0.8"/>
  <path d="M504 326.6 L529.6 330 L538 335 L518 339.2 L504 337.4Z" fill="#55585b"/>
  <path d="M504 332 Q516 329.4 526 333.6 Q516 338.6 504 336.6Z" fill="#3e4144"/>
  <path d="M504 343 L517.4 345.4 L516.8 348.4 L504 347Z" fill="#1d1b1a"/>
  <!-- faucet -->
  <path d="M515.9 312.6 L516 309 Q516.4 307.6 518.4 307.5 L535.6 305.6 L537.2 328.6" fill="none" stroke="#ececec" stroke-width="1.8" stroke-linejoin="round"/>
  <path d="M537.2 328.6 L547.4 333.4" stroke="#d6d6d6" stroke-width="1.6" fill="none"/>
  <path d="M533 322.6 L536.6 323.2" stroke="#dcdcdc" stroke-width="1.6"/>
  <!-- lower cabinet -->
  <path d="M504 384.2 L590.7 367.8 L593.2 445.8 L512.4 473.2 L504 465.6Z" fill="#2a1e1d"/>
  <path d="M504 384.2 L590.7 367.8 L590.8 372 L504 388.6Z" fill="#382a28"/>
  <path d="M545.8 380.6 L552 441.8 M555 378.6 L560.7 440.6" stroke="#c8c8c8" stroke-width="1.2" fill="none"/>
  <!-- sconces -->
  <g>
    <rect x="552.8" y="209.4" width="4" height="10.2" fill="#c9c9c9"/>
    <rect x="554.6" y="200" width="11.4" height="13.6" rx="1" fill="url(#gcyl)"/>
    <rect x="555.2" y="212.6" width="10.8" height="7" fill="#a2a2a2"/>
    <rect x="556" y="218.6" width="11" height="13.4" rx="1" fill="url(#gcyl)"/>
    <ellipse cx="560.3" cy="200.4" rx="5.7" ry="1.2" fill="#f1f1f1"/>
  </g>
  <g>
    <rect x="675.6" y="246" width="4" height="11.4" fill="#c9c9c9"/>
    <rect x="677.8" y="237.6" width="12" height="14.8" rx="1" fill="url(#gcyl)"/>
    <rect x="677.8" y="251.4" width="12.4" height="6.6" fill="#a2a2a2"/>
    <rect x="678.4" y="257" width="12.2" height="14.4" rx="1" fill="url(#gcyl)"/>
    <ellipse cx="683.8" cy="238" rx="6" ry="1.2" fill="#f1f1f1"/>
  </g>
  <!-- rug -->
  <path d="M628.6 504.6 L504 561.4 L504 586 L759 586 Z" fill="#d9ca92"/>
  <path d="M628.6 504.6 L759 586 L751.6 586 L628.4 508.4 Z" fill="#cebd80"/>
  <path d="M628.4 509.8 L504 566.2 L504 586 L750 586 Z" fill="#17130c"/>
  <path d="M628.4 511.4 L504 567.8 L504 586 L747.4 586 Z" fill="#a2844a"/>
  <g clip-path="url(#rugclip)">
    <!-- beige centre field -->
    <path d="M652 535.6 L640 544 L604 562 L588 586 L700 586 L690 560 Z" fill="#b89d66"/>
    <g fill="none" stroke="#cfbc8a" stroke-width="1.6" stroke-linecap="round" opacity="0.9">
      <path d="M606 572 q6-8 14-4 q6 4 0 10 q10-2 12 6"/>
      <path d="M626 560 q8-6 14 0 q4 6 -4 8 q8 2 8 8 q-6 6 -14 2"/>
      <path d="M648 552 q8-2 10 4 q-2 6 -8 4 M662 562 q8 0 8 8 q-4 6 -10 2 M650 572 q6 2 4 10"/>
      <path d="M672 550 q6 2 6 8 M668 578 q6-4 12 0"/>
    </g>
    <!-- dark lower right block -->
    <path d="M652 586 L692 560.6 L747 586Z" fill="#17130d"/>
    <path d="M660 586 L693 565 M668 586 L697 567.4 M676 586 L701.6 570 M684 586 L706 572.6 M692 586 L710.6 575.4 M700 586 L715 578.4 M708 586 L720 581" stroke="#453b2b" stroke-width="0.8" fill="none"/>
    <path d="M688 562.4 q6-3 11 1.400 q-2 4.600 -8 3.600 q-4-1.400 -3-5z M716 582 q6-4 12 0 q-4 4 -12 4z M660 584 q6-5 13-1.400 l-2 3.400 h-11z M700 568 q4 0 5 3" fill="#d9c890"/>
    <!-- black ornament near apex -->
    <g fill="#15110b">
      <path d="M586 531 q4-5 10-3 q4 2 2 6 q-4 4 -10 2 q-3-2 -2-5z"/>
      <path d="M600 526 q6-5 13-2 q3 3 -1 6 q-6 3 -11 1 q-3-2 -1-5z"/>
      <path d="M615 521.400 q7-4 13 0 q3 4 -2 6 q-7 2 -11-1 q-2-3 0-5z"/>
      <path d="M610 533 q8-3 16 1 q4 4 -2 6 q-8 2 -14-1 q-3-3 0-6z"/>
      <path d="M630 526 q6-2 11 2 q2 4 -3 5 q-6 1 -9-2 q-1-3 1-5z"/>
      <path d="M640 531.400 q5-1 9 3 q1 3 -3 4 q-5 0 -7-3 q-1-2 1-4z"/>
      <path d="M598 537 q5-2 9 1 q-1 4 -6 4 q-4-1 -3-5z"/>
    </g>
    <circle cx="621.400" cy="524" r="1.600" fill="#a2844a"/><circle cx="607" cy="529" r="1.400" fill="#a2844a"/><circle cx="618" cy="536.400" r="1.500" fill="#a2844a"/>
    <g fill="none" stroke="#15110b" stroke-linecap="round" stroke-linejoin="round">
      <path d="M577 556 Q581 547 590 545.600 Q606 545 628 542.400" stroke-width="2.600"/>
      <path d="M553 545 Q562 540 570 543.400 Q576 548 572 555 Q566 564 549 572 Q540 576 530 578" stroke-width="4.200"/>
      <path d="M533 557 Q540 550 548 552.400 Q554 556 549 562 Q543 566 537 563" stroke-width="2.400"/>
      <path d="M606 548 q8-2 14 0 M596 552 q6-3 12-1" stroke-width="1.800"/>
      <path d="M574 568 l5-1 M584 564.400 l5-1.400 M592 562 l4-1" stroke-width="3"/>
      <path d="M574 572.400 l6-0.600 M586 569 l4-1" stroke-width="2"/>
    </g>
    <g fill="none" stroke="#15110b" stroke-linecap="round">
      <path d="M590 533 Q600 522 618 518.600 Q630 518 640 526 Q648 532 652 538" stroke-width="3.200"/>
      <path d="M596 540 Q610 536 624 540 Q634 542 644 538" stroke-width="3"/>
      <path d="M604 530 L612 524 M622 530 L628 522 M634 534 L640 528" stroke-width="2.600"/>
      <path d="M560 552 Q566 548 572 549" stroke-width="2"/>
      <path d="M520 566 Q528 560 538 560" stroke-width="2.400"/>
    </g>
    <path d="M504 567.400 L514 563.600 Q524 566 532 574 Q540 580 548 580 Q556 582 552 586 L504 586Z" fill="#15110b"/>
    <path d="M507 574 q5-3 9 0 q-2 4 -8 3z M516 582 q6-2 10 1 l-1 3 h-9z M528 570 q3 0 4 3" fill="#b49a5e"/>
    <path d="M504 578 l8 2 l4 6 h-12z" fill="#c9b47a"/>
  </g>
  <!-- bottom black band -->
  <rect x="504" y="586" width="507" height="5" fill="#0b0b0b"/>
</svg>
<!-- ===== 3D toolbar icons ===== -->
<svg style="left:505px;top:86px" width="294" height="36" viewBox="505 86 294 36">
  <!-- select arrow with picture -->
  <defs><path id="a3" d="M514 93.600 L529.800 102.600 L523.600 105.800 L528.800 113.400 L525 116.200 L519.800 108.800 L514.800 111.800Z"/><clipPath id="arc"><use href="#a3"/></clipPath></defs>
  <use href="#a3" fill="none" stroke="#5a5a5a" stroke-width="5.600" stroke-linejoin="round"/>
  <use href="#a3" fill="#fff" stroke="#fbfbfb" stroke-width="3.800" stroke-linejoin="round"/>
  <g clip-path="url(#arc)"><rect x="510" y="90" width="24" height="30" fill="#6ab2ea"/><path d="M513 106 l9-2 l10 14 h-19z" fill="#d5ecf8"/><circle cx="519.600" cy="102.800" r="3.100" fill="#f2e532"/><path d="M515 104 h10 v3 h-10z" fill="#cfe8f6" opacity="0.800"/><path d="M521 109 l5-1.600 l5 8 l-6 3z" fill="#2fa03a"/></g>
  <use href="#a3" fill="none" stroke="#3a3a3a" stroke-width="1.200" stroke-linejoin="round"/>
  <!-- eyedropper -->
  <path d="M547.400 91.600 q2.400-2.600 5-0.200 l5.600 5.600 l-4.800 4.800 l-5.800-5.400 q-2.400-2.400 0-4.800z" fill="#1f3550"/>
  <path d="M550.800 101.600 l7.800-7.800 l2.400 2.400 l-7.800 7.800z" fill="#1f3550"/>
  <path d="M555.400 102 l3.200-3.200 l7.600 8.800 l-2 2z" fill="#cfe2f2" stroke="#1f3550" stroke-width="1.100" stroke-linejoin="round"/>
  <path d="M563.600 109.400 l2.400-2.200 l1.400 1.800 l-2 2z" fill="#1f3550"/>
  <path d="M566.800 111.400 q2.400 3 2.400 4.400 a2.400 2.400 0 0 1 -4.800 0 q0-1.400 2.400-4.400z" fill="#6ab4e8" stroke="#2a6aa0" stroke-width="0.700"/>
  <!-- walking person -->
  <g fill="#eef030" stroke="#5a5a1a" stroke-width="0.8" stroke-linejoin="round">
    <circle cx="591.2" cy="92.4" r="2.7"/>
    <path d="M589.6 95.8 q2.4-1 4 0.6 l1.6 4.4 l3.4 2 l-0.8 1.6 l-4.4-2 l-0.8-1.6 l-0.6 4 l3.6 3.6 l1.4 5 l-2 0.6 l-1.6-4.6 l-3.6-2.8 l-1.4 4.6 l-3.4 3.6 l-1.6-1.4 l3-3.4 l1.4-7.4 l-2 1.6 l-0.8 3.2 l-1.8-0.4 l1-4.2z"/>
  </g>
  <path d="M579.4 118.6 v-4.4 h2 v2 h1.6 v-3.2 h2 v3.2 h1.6 v-2 h2 v2 h1.6 v-3.2 h2 v3.2 h1.6 v-2 h2 v2 h1.6 v-3.2 h2 v3.2 h1.6 v-2 h2 v4.400z" fill="#0f6a14"/>
  <!-- helicopter -->
  <g fill="#3f86cc" stroke="#2f6cae" stroke-width="0.500" stroke-linejoin="round">
    <rect x="617.600" y="93.400" width="25.600" height="1.300" stroke="none"/>
    <rect x="634.400" y="94.400" width="1.600" height="1.800" stroke="none"/>
    <path d="M614.400 93.400 Q616.400 93 617.400 95.400 L618.400 97.800 L628.600 97.400 Q631 95.400 636 95.600 Q641 96.200 642.600 100 Q641 102.600 637 102.600 H631.600 Q629 102.400 628.200 100.400 L616.600 100.800 Q614.600 100.800 614.600 98.800Z"/>
    <path d="M630.400 104.200 H639.800" stroke-width="1.200" fill="none"/>
    <path d="M632.600 102.600 v1.600 M637.400 102.600 v1.600" stroke-width="0.900" fill="none"/>
  </g>
  <circle cx="616" cy="97.800" r="0.900" fill="#eaf3fb"/>
  <path d="M614.600 113.800 v-3.200 q1-1.600 2-0.200 v1.400 h1.200 v-2.200 q1-1.600 2 0 v2.200 h1.200 v-1.400 q1-1.400 2 0 v1.400 h1.200 v-2.200 q1-1.600 2 0 v2.200 h1.200 v-1.400 q1-1.400 2 0 v1.400 h1.200 v-2.200 q1-1.600 2 0 v2.200 h1.200 v-1.400 q1-1.400 2 0 v1.400 h1.200 v-2.200 q1-1.600 2 0 v5.400z" fill="#0c5e12"/>
  <!-- satellite + dome -->
  <g>
    <rect x="654.600" y="95" width="6.600" height="3.400" rx="1.600" fill="#fbfbfb" stroke="#5a5a5a" stroke-width="0.800"/>
    <rect x="666" y="95" width="6.800" height="3.400" rx="1.600" fill="#fbfbfb" stroke="#5a5a5a" stroke-width="0.800"/>
    <path d="M660.800 99.600 V93 Q663.500 88 666.200 93 V99.600Z" fill="#fdfdfd" stroke="#5a5a5a" stroke-width="0.800"/>
    <path d="M661.400 92.800 h4.400" stroke="#9a9a9a" stroke-width="0.600"/>
    <path d="M661.400 103.400 L663.500 100.200 L665.600 103.400Z" fill="#8a1818"/>
    <path d="M651.600 119 Q651.600 104.600 664 104.200 Q676.400 104.600 676.400 119Z" fill="#4a94d8" stroke="#2f6fb5" stroke-width="0.700"/>
    <g fill="#e9f3fb">
      <ellipse cx="659.400" cy="108.600" rx="1.700" ry="1.200" transform="rotate(-25 659.400 108.600)"/><ellipse cx="664" cy="107.400" rx="1.700" ry="1.200"/><ellipse cx="668.600" cy="108.600" rx="1.700" ry="1.200" transform="rotate(25 668.600 108.600)"/>
      <ellipse cx="656.400" cy="112.600" rx="1.700" ry="1.300" transform="rotate(-30 656.400 112.600)"/><ellipse cx="661.400" cy="111.600" rx="1.800" ry="1.300"/><ellipse cx="666.600" cy="111.600" rx="1.800" ry="1.300"/><ellipse cx="671.600" cy="112.600" rx="1.700" ry="1.300" transform="rotate(30 671.600 112.600)"/>
      <ellipse cx="654.600" cy="116.800" rx="1.600" ry="1.300"/><ellipse cx="659.200" cy="116" rx="1.900" ry="1.400"/><ellipse cx="664" cy="115.800" rx="1.900" ry="1.400"/><ellipse cx="668.800" cy="116" rx="1.900" ry="1.400"/><ellipse cx="673.400" cy="116.800" rx="1.600" ry="1.300"/>
    </g>
  </g>
  <!-- floor plan -->
  <g fill="none" stroke="#3c78b4" stroke-width="1.900" stroke-linejoin="miter" stroke-linecap="butt">
    <path d="M701.600 94 H686.600 V109 M686.600 109 H690 M693 109 H701 M685.200 109 V115.600 H695.600 V109.400"/>
    <path d="M701.600 92 H712.400 V102 H701.600 M701.600 92 V96 M701.600 99 V104.600 M701.600 107 V109"/>
    <path d="M711.400 102 V112.400 H696.400 M703.400 102 V102"/>
  </g>
  <!-- sun + cloud + camera -->
  <g>
    <g fill="#f5dc1c" stroke="#c9a800" stroke-width="0.6">
      <ellipse cx="765.800" cy="91.600" rx="1.900" ry="2.700"/>
      <ellipse cx="759" cy="94" rx="1.900" ry="2.700" transform="rotate(-38 759 94)"/>
      <ellipse cx="772.800" cy="94" rx="1.900" ry="2.700" transform="rotate(38 772.800 94)"/>
      <ellipse cx="756" cy="100.800" rx="1.900" ry="2.700" transform="rotate(-78 756 100.800)"/>
      <ellipse cx="776.400" cy="99.800" rx="1.700" ry="2.500" transform="rotate(70 776.400 99.800)"/>
      <path d="M759.600 102.600 q0.400-6.400 6.200-6.600 q5.800 0.200 6.200 6.600z"/>
    </g>
    <path d="M760.600 116.600 q-4.400-0.400 -3.400-5.600 q0.600-4 5-4 q1.400-4.800 6.800-4.600 q4 0.200 5.400 3.400 q4.600-3.200 8 0.600 q3.400 4.400 -0.800 8 q-0.400 3.800 -4.800 3.600 q-3.200 2.400 -6.800 0 q-4.600 1.800 -9.400-1.400z" fill="#7fd3f5" stroke="#3aa0d0" stroke-width="0.8"/>
    <rect x="753.400" y="110.400" width="12.800" height="8.600" rx="1.400" fill="#fafafa" stroke="#8a8a8a" stroke-width="0.9"/>
    <rect x="756" y="109.400" width="3.600" height="1.600" fill="#e0e0e0" stroke="#8a8a8a" stroke-width="0.5"/>
    <circle cx="761.400" cy="114.800" r="2.300" fill="#fff" stroke="#8a8a8a" stroke-width="0.8"/>
  </g>
  <!-- picture + camera (partly hidden) -->
  <g>
    <rect x="788.600" y="89.400" width="12" height="23.400" fill="#1e2f52"/>
    <rect x="790" y="91" width="10" height="15" fill="#6cb4ea"/>
    <rect x="790" y="106" width="10" height="5.400" fill="#2d9a3a"/>
    <circle cx="796.600" cy="98" r="1.800" fill="#f5e030"/><circle cx="793.400" cy="99.600" r="1.300" fill="#f5e030"/><circle cx="794.600" cy="94.600" r="1.300" fill="#f5e030"/>
    <rect x="790.400" y="111.600" width="10" height="7" rx="1" fill="#fafafa" stroke="#8a8a8a" stroke-width="0.900"/>
  </g>
</svg>
<!-- ===== library panel ===== -->
<div style="left:798px;top:78px;width:212.5px;height:476px;background:#fff;border:1px solid #7d7d7d"></div>
<svg style="left:799px;top:79px" width="211" height="43" viewBox="799 79 211 43">
<rect x="799" y="79" width="211" height="14.4" fill="#fdfdfd"/>
<path d="M1000 83.6 L1006 89.8 M1006 83.6 L1000 89.8" stroke="#111" stroke-width="1.7" fill="none"/>
<rect x="799" y="93.4" width="211" height="27" fill="#fcfcfc"/>
<rect x="860" y="93.8" width="60.6" height="26.4" fill="#ebebeb"/><rect x="921" y="93.800" width="60.600" height="26.400" fill="#ebebeb"/>
<path d="M799 93.4 H1010 M859.600 94 V120 M920.600 94 V120 M981.800 94 V120" stroke="#d8d8d8" stroke-width="0.9" fill="none"/>
<rect x="799" y="119.8" width="211" height="1.5" fill="#777"/>
<g stroke="#5a3410" stroke-width="0.500" stroke-linejoin="round"><path d="M821.600 103.400 L828.800 105 L836 103.400 V110.400 L828.800 112.800 L821.600 110.400Z" fill="#8e5220"/><path d="M828.800 105 L836 103.400 V110.400 L828.800 112.800Z" fill="#a4622a"/><path d="M822.400 101.400 L828.800 100 L835.200 101.400 L828.800 103Z" fill="#6a3a14"/><path d="M821.600 103.400 L820 101 L824.600 99.600 L828.800 101.800 L828.800 105Z" fill="#a8682e"/><path d="M836 103.400 L837.600 101 L833 99.600 L828.800 101.800 L828.800 105Z" fill="#b4743a"/></g>
<path d="M828.800 101.800 V112.600" stroke="#f0e4d4" stroke-width="0.900"/>
<g fill="#c2c2c2" stroke="#b0b0b0" stroke-width="0.700"><path d="M882.400 114.800 Q882.200 109 886.600 107.800 Q889.700 109.600 892.800 107.800 Q897.200 109 897 114.800Z"/><ellipse cx="889.700" cy="102.600" rx="4" ry="4.900"/></g>
<path d="M947.600 98 h5.200 v5.400 h3.800 l-6.400 6 l-6.400-6 h3.800z" fill="#149428" stroke="#0f7a20" stroke-width="0.500"/><path d="M943.200 107.800 v4 q0 1.500 1.500 1.500 h11.800 q1.500 0 1.500-1.500 v-4" fill="none" stroke="#4a9ae8" stroke-width="2.700" stroke-linecap="butt"/>
<path d="M996.900 98.400 l2.500 5.700 l6.200 0.600 l-4.700 4.100 l1.400 6.100 l-5.400-3.200 l-5.400 3.200 l1.400-6.100 l-4.700-4.100 l6.200-0.600z" fill="#fff" stroke="#454545" stroke-width="1.150" stroke-linejoin="miter"/>
</svg>
<div style="left:995px;top:121.4px;width:14.4px;height:402px;background:#f0f0f0"></div>
<div style="left:995.6px;top:136.4px;width:13px;height:337px;background:#cdcdcd"></div>
<svg style="left:995px;top:121px" width="15" height="402" viewBox="995 121 15 402"><path d="M998.600 130.400 L1002.200 126.800 L1005.800 130.400 M998.600 513.600 L1002.200 517.200 L1005.800 513.600" fill="none" stroke="#404040" stroke-width="1.7"/></svg>
<svg style="left:799px;top:121.400px" width="196" height="402" viewBox="799 121.400 196 402">
<path d="M811 128.6 V523.400" stroke="#a8a8a8" stroke-width="0.9" stroke-dasharray="1 1" fill="none"/>
<path d="M828 386.7 V494.2" stroke="#a8a8a8" stroke-width="0.900" stroke-dasharray="1 1" fill="none"/>
<path d="M811 128.6 H819.400" stroke="#a0a0a0" stroke-width="0.900" stroke-dasharray="1 1"/>
<rect x="806.900" y="124.5" width="8.200" height="8.200" rx="1" fill="#fdfdff" stroke="#8c94b4" stroke-width="0.900"/>
<path d="M808.800 128.6 h4.400 M811 126.4 v4.400" stroke="#2a3a7a" stroke-width="1.100" fill="none"/>
<path d="M811 142.7 H819.400" stroke="#a0a0a0" stroke-width="0.900" stroke-dasharray="1 1"/>
<rect x="806.900" y="138.6" width="8.200" height="8.200" rx="1" fill="#fdfdff" stroke="#8c94b4" stroke-width="0.900"/>
<path d="M808.800 142.7 h4.400 M811 140.5 v4.400" stroke="#2a3a7a" stroke-width="1.100" fill="none"/>
<path d="M811 156.7 H819.400" stroke="#a0a0a0" stroke-width="0.900" stroke-dasharray="1 1"/>
<rect x="806.900" y="152.6" width="8.200" height="8.200" rx="1" fill="#fdfdff" stroke="#8c94b4" stroke-width="0.900"/>
<path d="M808.800 156.7 h4.400 M811 154.5 v4.400" stroke="#2a3a7a" stroke-width="1.100" fill="none"/>
<path d="M811 170.8 H819.400" stroke="#a0a0a0" stroke-width="0.900" stroke-dasharray="1 1"/>
<rect x="806.900" y="166.7" width="8.200" height="8.200" rx="1" fill="#fdfdff" stroke="#8c94b4" stroke-width="0.900"/>
<path d="M808.800 170.8 h4.400 M811 168.6 v4.400" stroke="#2a3a7a" stroke-width="1.100" fill="none"/>
<path d="M811 184.8 H819.400" stroke="#a0a0a0" stroke-width="0.900" stroke-dasharray="1 1"/>
<rect x="806.900" y="180.7" width="8.200" height="8.200" rx="1" fill="#fdfdff" stroke="#8c94b4" stroke-width="0.900"/>
<path d="M808.800 184.8 h4.400 M811 182.6 v4.400" stroke="#2a3a7a" stroke-width="1.100" fill="none"/>
<path d="M811 198.9 H819.400" stroke="#a0a0a0" stroke-width="0.900" stroke-dasharray="1 1"/>
<rect x="806.900" y="194.8" width="8.200" height="8.200" rx="1" fill="#fdfdff" stroke="#8c94b4" stroke-width="0.900"/>
<path d="M808.800 198.9 h4.400 M811 196.7 v4.400" stroke="#2a3a7a" stroke-width="1.100" fill="none"/>
<path d="M811 213.0 H819.400" stroke="#a0a0a0" stroke-width="0.900" stroke-dasharray="1 1"/>
<rect x="806.900" y="208.9" width="8.200" height="8.200" rx="1" fill="#fdfdff" stroke="#8c94b4" stroke-width="0.900"/>
<path d="M808.800 213.0 h4.400 M811 210.8 v4.400" stroke="#2a3a7a" stroke-width="1.100" fill="none"/>
<path d="M811 227.0 H819.400" stroke="#a0a0a0" stroke-width="0.900" stroke-dasharray="1 1"/>
<path d="M811 241.1 H819.400" stroke="#a0a0a0" stroke-width="0.900" stroke-dasharray="1 1"/>
<rect x="806.900" y="237.0" width="8.200" height="8.200" rx="1" fill="#fdfdff" stroke="#8c94b4" stroke-width="0.900"/>
<path d="M808.800 241.1 h4.400 M811 238.9 v4.400" stroke="#2a3a7a" stroke-width="1.100" fill="none"/>
<path d="M811 255.1 H819.400" stroke="#a0a0a0" stroke-width="0.900" stroke-dasharray="1 1"/>
<path d="M811 269.2 H819.400" stroke="#a0a0a0" stroke-width="0.900" stroke-dasharray="1 1"/>
<rect x="806.900" y="265.1" width="8.200" height="8.200" rx="1" fill="#fdfdff" stroke="#8c94b4" stroke-width="0.900"/>
<path d="M808.800 269.2 h4.400 M811 267.0 v4.400" stroke="#2a3a7a" stroke-width="1.100" fill="none"/>
<path d="M811 283.3 H819.400" stroke="#a0a0a0" stroke-width="0.900" stroke-dasharray="1 1"/>
<rect x="806.900" y="279.2" width="8.200" height="8.200" rx="1" fill="#fdfdff" stroke="#8c94b4" stroke-width="0.900"/>
<path d="M808.800 283.3 h4.400 M811 281.1 v4.400" stroke="#2a3a7a" stroke-width="1.100" fill="none"/>
<path d="M811 297.3 H819.400" stroke="#a0a0a0" stroke-width="0.900" stroke-dasharray="1 1"/>
<rect x="806.900" y="293.2" width="8.200" height="8.200" rx="1" fill="#fdfdff" stroke="#8c94b4" stroke-width="0.900"/>
<path d="M808.800 297.3 h4.400 M811 295.1 v4.400" stroke="#2a3a7a" stroke-width="1.100" fill="none"/>
<path d="M811 311.4 H819.400" stroke="#a0a0a0" stroke-width="0.900" stroke-dasharray="1 1"/>
<rect x="806.900" y="307.3" width="8.200" height="8.200" rx="1" fill="#fdfdff" stroke="#8c94b4" stroke-width="0.900"/>
<path d="M808.800 311.4 h4.400 M811 309.2 v4.400" stroke="#2a3a7a" stroke-width="1.100" fill="none"/>
<path d="M811 325.4 H819.400" stroke="#a0a0a0" stroke-width="0.900" stroke-dasharray="1 1"/>
<rect x="806.900" y="321.3" width="8.200" height="8.200" rx="1" fill="#fdfdff" stroke="#8c94b4" stroke-width="0.900"/>
<path d="M808.800 325.4 h4.400 M811 323.2 v4.400" stroke="#2a3a7a" stroke-width="1.100" fill="none"/>
<path d="M811 339.5 H819.400" stroke="#a0a0a0" stroke-width="0.900" stroke-dasharray="1 1"/>
<rect x="806.900" y="335.4" width="8.200" height="8.200" rx="1" fill="#fdfdff" stroke="#8c94b4" stroke-width="0.900"/>
<path d="M808.800 339.5 h4.400 M811 337.3 v4.400" stroke="#2a3a7a" stroke-width="1.100" fill="none"/>
<path d="M811 353.6 H819.400" stroke="#a0a0a0" stroke-width="0.900" stroke-dasharray="1 1"/>
<rect x="806.900" y="349.5" width="8.200" height="8.200" rx="1" fill="#fdfdff" stroke="#8c94b4" stroke-width="0.900"/>
<path d="M808.800 353.6 h4.400 M811 351.4 v4.400" stroke="#2a3a7a" stroke-width="1.100" fill="none"/>
<path d="M811 367.6 H819.400" stroke="#a0a0a0" stroke-width="0.900" stroke-dasharray="1 1"/>
<path d="M811 381.7 H819.400" stroke="#a0a0a0" stroke-width="0.900" stroke-dasharray="1 1"/>
<rect x="806.900" y="377.6" width="8.200" height="8.200" rx="1" fill="#fdfdff" stroke="#8c94b4" stroke-width="0.900"/>
<path d="M808.800 381.7 h4.400" stroke="#2a3a7a" stroke-width="1.100" fill="none"/>
<path d="M828 395.7 H836" stroke="#a0a0a0" stroke-width="0.900" stroke-dasharray="1 1"/>
<path d="M828 409.8 H836" stroke="#a0a0a0" stroke-width="0.900" stroke-dasharray="1 1"/>
<path d="M828 423.9 H836" stroke="#a0a0a0" stroke-width="0.900" stroke-dasharray="1 1"/>
<path d="M828 437.9 H836" stroke="#a0a0a0" stroke-width="0.900" stroke-dasharray="1 1"/>
<path d="M828 452.0 H836" stroke="#a0a0a0" stroke-width="0.900" stroke-dasharray="1 1"/>
<path d="M828 466.0 H836" stroke="#a0a0a0" stroke-width="0.900" stroke-dasharray="1 1"/>
<path d="M828 480.1 H836" stroke="#a0a0a0" stroke-width="0.900" stroke-dasharray="1 1"/>
<path d="M828 494.2 H836" stroke="#a0a0a0" stroke-width="0.900" stroke-dasharray="1 1"/>
<path d="M811 508.2 H819.400" stroke="#a0a0a0" stroke-width="0.900" stroke-dasharray="1 1"/>
<rect x="806.900" y="504.1" width="8.200" height="8.200" rx="1" fill="#fdfdff" stroke="#8c94b4" stroke-width="0.900"/>
<path d="M808.800 508.2 h4.400 M811 506.0 v4.400" stroke="#2a3a7a" stroke-width="1.100" fill="none"/>
<path d="M811 522.3 H819.400" stroke="#a0a0a0" stroke-width="0.900" stroke-dasharray="1 1"/>
</svg>
<div style="left:0;top:0;width:995px;height:523.400px;overflow:hidden">
<span class="t" style="left:821.2px;top:123.41px;font-size:10.5px;line-height:10.5px;letter-spacing:-0.266px;color:#111">Bathroom</span>
<span class="t" style="left:821.2px;top:137.47px;font-size:10.5px;line-height:10.5px;letter-spacing:-0.401px;color:#111">Bedroom</span>
<span class="t" style="left:821.2px;top:151.53px;font-size:10.5px;line-height:10.5px;letter-spacing:-0.220px;color:#111">Building Elements</span>
<span class="t" style="left:821.2px;top:165.59px;font-size:10.5px;line-height:10.5px;letter-spacing:-0.322px;color:#111">Building Systems</span>
<span class="t" style="left:821.2px;top:179.65px;font-size:10.5px;line-height:10.5px;letter-spacing:-0.328px;color:#111">Closet</span>
<span class="t" style="left:821.2px;top:193.71px;font-size:10.5px;line-height:10.5px;letter-spacing:-0.098px;color:#111">Decoration</span>
<span class="t" style="left:821.2px;top:207.77px;font-size:10.5px;line-height:10.5px;letter-spacing:-0.278px;color:#111">Eco-Friendly</span>
<span class="t" style="left:821.2px;top:221.83px;font-size:10.5px;line-height:10.5px;letter-spacing:-0.683px;color:#111">Exercise</span>
<span class="t" style="left:821.2px;top:235.89px;font-size:10.5px;line-height:10.5px;letter-spacing:-0.261px;color:#111">Exterior</span>
<span class="t" style="left:821.2px;top:249.95px;font-size:10.5px;line-height:10.5px;letter-spacing:-0.404px;color:#111">Fireplaces</span>
<span class="t" style="left:821.2px;top:264.01px;font-size:10.5px;line-height:10.5px;letter-spacing:-0.266px;color:#111">Gameroom and Music</span>
<span class="t" style="left:821.2px;top:278.07px;font-size:10.5px;line-height:10.5px;letter-spacing:-0.216px;color:#111">Garage and Home Workshop</span>
<span class="t" style="left:821.2px;top:292.13px;font-size:10.5px;line-height:10.5px;letter-spacing:-0.396px;color:#111">Handicap Access</span>
<span class="t" style="left:821.2px;top:306.19px;font-size:10.5px;line-height:10.5px;letter-spacing:-0.241px;color:#111">Hardware</span>
<span class="t" style="left:821.2px;top:320.25px;font-size:10.5px;line-height:10.5px;letter-spacing:-0.295px;color:#111">Home Theater</span>
<span class="t" style="left:821.2px;top:334.31px;font-size:10.5px;line-height:10.5px;letter-spacing:-0.126px;color:#111">Household Appliances</span>
<span class="t" style="left:821.2px;top:348.37px;font-size:10.5px;line-height:10.5px;letter-spacing:-0.086px;color:#111">Kitchen and Dining</span>
<span class="t" style="left:821.2px;top:362.43px;font-size:10.5px;line-height:10.5px;letter-spacing:-0.330px;color:#111">Library</span>
<span class="t" style="left:821.2px;top:376.49px;font-size:10.5px;line-height:10.5px;letter-spacing:0.077px;color:#111">Lighting</span>
<span class="t" style="left:838.2px;top:390.55px;font-size:10.5px;line-height:10.5px;letter-spacing:-0.602px;color:#111">Bath</span>
<span class="t" style="left:838.2px;top:404.61px;font-size:10.5px;line-height:10.5px;letter-spacing:-0.144px;color:#111">Ceiling</span>
<span class="t" style="left:838.2px;top:418.67px;font-size:10.5px;line-height:10.5px;letter-spacing:-0.298px;color:#111">Ceiling Fans</span>
<span class="t" style="left:838.2px;top:432.73px;font-size:10.5px;line-height:10.5px;letter-spacing:-0.323px;color:#111">Exterior</span>
<span class="t" style="left:838.2px;top:446.79px;font-size:10.5px;line-height:10.5px;letter-spacing:-0.228px;color:#111">Floor</span>
<span class="t" style="left:838.2px;top:460.85px;font-size:10.5px;line-height:10.5px;letter-spacing:-0.046px;color:#111">Hanging</span>
<div class="b" style="left:835.800px;top:473.4px;width:78.400px;height:13.600px;background:#0b63d1"></div>
<span class="t" style="left:838.2px;top:474.91px;font-size:10.5px;line-height:10.5px;letter-spacing:-0.260px;color:#fff">Sconce and Wall</span>
<span class="t" style="left:838.2px;top:488.97px;font-size:10.5px;line-height:10.5px;letter-spacing:-0.262px;color:#111">Table</span>
<span class="t" style="left:821.2px;top:503.03px;font-size:10.5px;line-height:10.5px;letter-spacing:-0.273px;color:#111">Living</span>
<span class="t" style="left:821.2px;top:517.09px;font-size:10.5px;line-height:10.5px;letter-spacing:-0.390px;color:#111">LogHome</span>
</div>
<div style="left:799px;top:523.400px;width:210.400px;height:29.600px;background:#f0f0f0;border-top:1px solid #9a9a9a"></div>
<div style="left:833.400px;top:532.400px;width:148.600px;height:16.600px;background:#fff;border:1px solid #8e8e8e"></div>
<svg style="left:799px;top:524px" width="211" height="29" viewBox="799 524 211 29">
<g transform="translate(816.400 540.400)"><path d="M-1.500 -8 h3 l0.600 2.200 l1.800 0.800 l2-1.200 l2.100 2.100 l-1.200 2 l0.800 1.800 l2.200 0.600 v3 l-2.200 0.600 l-0.800 1.800 l1.200 2 l-2.100 2.100 l-2-1.200 l-1.800 0.800 l-0.600 2.200 h-3 l-0.600-2.200 l-1.800-0.800 l-2 1.200 l-2.100-2.100 l1.200-2 l-0.800-1.800 l-2.200-0.600 v-3 l2.200-0.600 l0.800-1.800 l-1.200-2 l2.100-2.100 l2 1.200 l1.800-0.800z" fill="#d2d2d2"/><circle r="3.200" fill="#ececec"/></g>
<circle cx="993.400" cy="538.400" r="4.600" fill="#f4f4f4" stroke="#6a6a6a" stroke-width="1.500"/><path d="M996.800 542 L1002.400 548" stroke="#5a5a5a" stroke-width="2.800" stroke-linecap="round"/>
</svg>
<!-- ===== right panel ===== -->
<div style="left:1010.500px;top:24px;width:190px;height:567px;background:#f8f8f8"></div>
<div style="left:1010px;top:24px;width:1px;height:567px;background:#d2d2d2"></div>
<div style="left:1011px;top:25px;width:189px;height:1px;background:#dcdcdc"></div>
<div style="left:1011px;top:26px;width:126.600px;height:26px;background:#efefef;border-bottom:1px solid #d9d9d9"></div>
<div style="left:1073.600px;top:26px;width:1px;height:26px;background:#d9d9d9"></div>
<div style="left:1137.600px;top:26px;width:62.400px;height:33px;background:#fafafa;border-left:1px solid #d9d9d9"></div>
<svg style="left:1011px;top:26px" width="189" height="34" viewBox="1011 26 189 34">
  <circle cx="1041.600" cy="37.400" r="10.600" fill="#2b90ea"/>
  <circle cx="1041.600" cy="31.800" r="1.500" fill="#fff"/><rect x="1040.300" y="34.600" width="2.600" height="8.800" rx="0.600" fill="#fff"/>
  <!-- pen nib -->
  <path d="M1096 27.800 L1102.800 29.600 L1110.600 36.400 L1104.800 42.800 L1098.400 36.400Z" fill="#3f5878" stroke="#2a3f5a" stroke-width="0.500"/>
  <path d="M1096 27.800 L1103.600 35.800" stroke="#dfe6ee" stroke-width="0.800"/><circle cx="1103.800" cy="36" r="1.100" fill="#f0f4f8"/>
  <path d="M1104.800 42.800 L1110.600 36.400 L1115 40.600 L1109.600 46.600Z" fill="#101418"/>
  <path d="M1105.600 42.200 L1110.200 37.200" stroke="#e8e8e8" stroke-width="1.200"/>
  <!-- red chair -->
  <g fill="#d51818">
    <rect x="1162.400" y="26.800" width="13" height="9.600" rx="1.200"/>
    <path d="M1159.200 33 q0-1.400 1.400-1.400 q1.400 0 1.400 1.400 v4.600 h13.800 v-4.600 q0-1.400 1.400-1.400 q1.400 0 1.400 1.400 v6.600 h-19.400z"/>
    <rect x="1161" y="40.200" width="16" height="3.200"/>
    <rect x="1162" y="43" width="2" height="5"/><rect x="1173.800" y="43" width="2" height="5"/>
  </g>
  <path d="M1162.600 36.800 h12.600" stroke="#f46a6a" stroke-width="0.800"/>
</svg>
<!-- dropdowns -->
<div style="left:1011px;top:59.600px;width:189px;height:19px;background:#fdfdfd;border-top:1px solid #dedede;border-bottom:1px solid #dedede"></div>
<div style="left:1011px;top:79px;width:189px;height:19px;background:#fdfdfd;border-bottom:1px solid #d6d6d6"></div>
<span class="t" style="left:1013.8px;top:63.89px;font-size:11.0px;line-height:11.0px;letter-spacing:-0.333px;color:#222">Furnishings</span>
<span class="t" style="left:1013.8px;top:83.29px;font-size:11.0px;line-height:11.0px;letter-spacing:-0.383px;color:#222">Sconce and Wall</span>
<svg style="left:1188px;top:64px" width="12" height="32" viewBox="1188 64 12 32"><path d="M1191.200 68.200 h6 l-3 3.600z M1191.200 87.200 h6 l-3 3.600z" fill="#444"/></svg>
<!-- thumbnails -->
<div style="left:1011px;top:98.600px;width:176px;height:176.400px;background:#f7f7f7"></div>
<div style="left:1011.400px;top:99.400px;width:87px;height:87px;background:#f0f0f0;border:3.400px solid #f6ca4d;box-shadow:0 0 1.500px #f6ca4d"></div>
<div style="left:1099px;top:99.400px;width:86.800px;height:87px;background:#f0f0f0"></div>
<div style="left:1011.400px;top:187.400px;width:87px;height:86.400px;background:#f0f0f0"></div>
<div style="left:1099px;top:187.400px;width:86.800px;height:86.400px;background:#f0f0f0"></div>
<svg style="left:1011px;top:99px" width="176" height="176" viewBox="1011 99 176 176">
  <defs>
    <linearGradient id="cone" x1="0" y1="0" x2="1" y2="0.300"><stop offset="0" stop-color="#9aa4a6"/><stop offset="0.180" stop-color="#dfe9ea"/><stop offset="0.600" stop-color="#e9f3f3"/><stop offset="0.900" stop-color="#e4efef"/><stop offset="1" stop-color="#4a4e50"/></linearGradient>
    <linearGradient id="cyl2" x1="0" y1="0" x2="1" y2="0"><stop offset="0" stop-color="#a6a6a6"/><stop offset="0.300" stop-color="#f2f2f2"/><stop offset="0.650" stop-color="#ffffff"/><stop offset="1" stop-color="#d0d0d0"/></linearGradient>
    <linearGradient id="bulb" x1="0" y1="0" x2="1" y2="0"><stop offset="0" stop-color="#b8b8b8"/><stop offset="0.350" stop-color="#ffffff"/><stop offset="0.750" stop-color="#f0f0f0"/><stop offset="1" stop-color="#9c9c9c"/></linearGradient>
    <radialGradient id="plate" cx="0.450" cy="0.400" r="0.650"><stop offset="0" stop-color="#5c5c5c"/><stop offset="0.500" stop-color="#3c3c3c"/><stop offset="0.750" stop-color="#505050"/><stop offset="1" stop-color="#3a3a3a"/></radialGradient>
    <path id="star" d="M0 -7.400 l1.900 4.900 l5.200 0.300 l-4 3.400 l1.300 5.100 l-4.400-2.800 l-4.400 2.800 l1.300-5.100 l-4-3.400 l5.200-0.300z"/>
  </defs>
  <!-- thumb 1 cone -->
  <clipPath id="conec"><path id="conep" d="M1015 132.600 Q1018 123.600 1030 119.800 Q1052 113.600 1075 114.800 Q1091 116.600 1096.200 122.400 Q1094 130 1086 137 Q1078 146 1071.400 156.400 Q1066 160 1063 161.600 Q1064.600 167.400 1062 170 Q1056 174.600 1050.600 171.400 Q1048 168.600 1048.600 166.600 Q1042 162.600 1037.600 157.600 Q1033 151 1027 149 Q1019 146 1016.600 141 Q1014.400 137 1015 132.600Z"/></clipPath>
  <filter id="blur3" x="-20%" y="-20%" width="140%" height="140%"><feGaussianBlur stdDeviation="2.2"/></filter>
  <g clip-path="url(#conec)">
    <rect x="1011" y="110" width="90" height="70" fill="#e8f2f2"/>
    <path d="M1013 132 Q1015 142 1027 150 Q1036 155 1048.600 168 Q1050 173 1058 173" fill="none" stroke="#596163" stroke-width="5.500" filter="url(#blur3)"/>
    <path d="M1098 121 Q1094 131 1085 138" fill="none" stroke="#3c4042" stroke-width="5" filter="url(#blur3)"/>
    <path d="M1022 124 Q1050 113 1090 120" fill="none" stroke="#c9d3d4" stroke-width="2.400" filter="url(#blur3)"/>
    <path d="M1040 126 Q1064 122 1084 126 Q1074 140 1062 152 Q1050 140 1040 126Z" fill="#f3f9f9" filter="url(#blur3)"/>
  </g>
  <use href="#star" transform="translate(1086 175.400)" fill="#fbfbfb" stroke="#8c8c8c" stroke-width="1"/>
  <!-- thumb 2 lamp -->
  <path d="M1130.400 131 Q1128 113.600 1134 113.800 Q1141 114 1146.400 134" fill="none" stroke="#2e2e2e" stroke-width="3.200" stroke-linecap="round"/>
  <ellipse cx="1130.400" cy="145.400" rx="29" ry="12.800" transform="rotate(-3 1130.400 145.400)" fill="#3a3a3a"/>
  <ellipse cx="1130.400" cy="142" rx="26" ry="8.600" transform="rotate(-3 1130.400 142)" fill="#4a4a4a"/>
  <ellipse cx="1131" cy="131.400" rx="3.400" ry="2.200" fill="#2c2c2c"/>
  <path d="M1119.800 137 Q1130 133.600 1140.600 137 V164.600 Q1140.600 173 1130.200 173 Q1119.800 173 1119.800 164.600Z" fill="url(#bulb)"/>
  <circle cx="1168.400" cy="156" r="16.600" fill="url(#plate)"/>
  <path d="M1158 149 q6-8 14-5 q6 3 5 10" fill="none" stroke="#6a6a6a" stroke-width="1.600" opacity="0.700"/>
  <use href="#star" transform="translate(1175 176.600)" fill="#fbfbfb" stroke="#8c8c8c" stroke-width="1"/>
  <!-- thumb 3 cylinder -->
  <path d="M1064.600 220.800 h7 v27 l-7 3.400z" fill="#b9b9b9"/>
  <rect x="1038" y="192.600" width="26" height="30" fill="url(#cyl2)"/>
  <ellipse cx="1051" cy="192.600" rx="13" ry="2.600" fill="#f6f6f6"/>
  <path d="M1038 222 L1046 219.600 L1065.600 220.400 L1065.600 231.600 L1039.600 233Z" fill="#c9c9c9"/>
  <path d="M1046 219.600 L1065.600 220.400 L1065.600 226 L1048 227Z" fill="#9c9c9c"/>
  <rect x="1038.800" y="231.200" width="26.200" height="34" fill="url(#cyl2)"/>
  <ellipse cx="1051.900" cy="264.800" rx="13.100" ry="5.600" fill="#b4b4b4"/>
  <use href="#star" transform="translate(1086.500 263.600)" fill="#fbfbfb" stroke="#8c8c8c" stroke-width="1"/>
  <!-- thumb 4 bowl -->
  <path d="M1102 216.600 Q1108 204 1126.400 200.400 Q1146 196.400 1163 198.600 Q1178 201.600 1184.400 208.600 Q1178 224 1164 236 Q1152 244 1143 242.400 Q1128 240 1112 232 Q1103 226 1102 216.600Z" fill="#dfcec7"/>
  <path d="M1102 216.600 Q1108 204 1126.400 200.400 Q1146 196.400 1163 198.600 Q1178 201.600 1184.400 208.600 Q1170 203 1150 203.400 Q1124 204 1102 216.600Z" fill="#efe3dd"/>
  <g fill="none" stroke="#1e1e1e" stroke-linecap="round">
    <path d="M1110 222 Q1124 232 1133 245" stroke-width="5.400"/>
    <path d="M1125.600 210 Q1134 228 1138 246" stroke-width="5.400"/>
    <path d="M1155.600 209 Q1153 228 1150.600 246" stroke-width="5.400"/>
    <path d="M1175.600 216 Q1166 234 1157 246" stroke-width="5.400"/>
    <path d="M1134 244 Q1144 239 1156 244" stroke-width="4"/>
    <path d="M1133 246 Q1136 258 1126 262 Q1117 263 1118.400 255 Q1120 250 1125 252" stroke-width="3.800"/>
    <path d="M1138 247 Q1134 256 1124 258" stroke-width="3.400"/>
    <path d="M1157 246 Q1160 256 1167 253 Q1171 249 1166 246.600" stroke-width="3.800"/>
  </g>
  <use href="#star" transform="translate(1174.200 263.600)" fill="#fbfbfb" stroke="#8c8c8c" stroke-width="1"/>
</svg>
<!-- right scrollbar -->
<div style="left:1186.800px;top:98.600px;width:13.200px;height:478px;background:#f0f0f0"></div>
<div style="left:1187.400px;top:114.800px;width:12.600px;height:14px;background:#c9c9c9"></div>
<svg style="left:1187px;top:99px" width="13" height="478" viewBox="1187 99 13 478"><path d="M1189.800 109.200 L1193.400 105.600 L1197 109.200 M1189.800 562.400 L1193.400 566 L1197 562.400" fill="none" stroke="#404040" stroke-width="1.700"/></svg>
<!-- mouse cursor fragment -->
<svg style="left:1194px;top:199px" width="6" height="20" viewBox="1194 199 6 20"><path d="M1199 201 V213 M1196.600 205 L1199.600 215" stroke="#111" stroke-width="1.600" fill="none"/></svg>
</div>
</body>
</html>
